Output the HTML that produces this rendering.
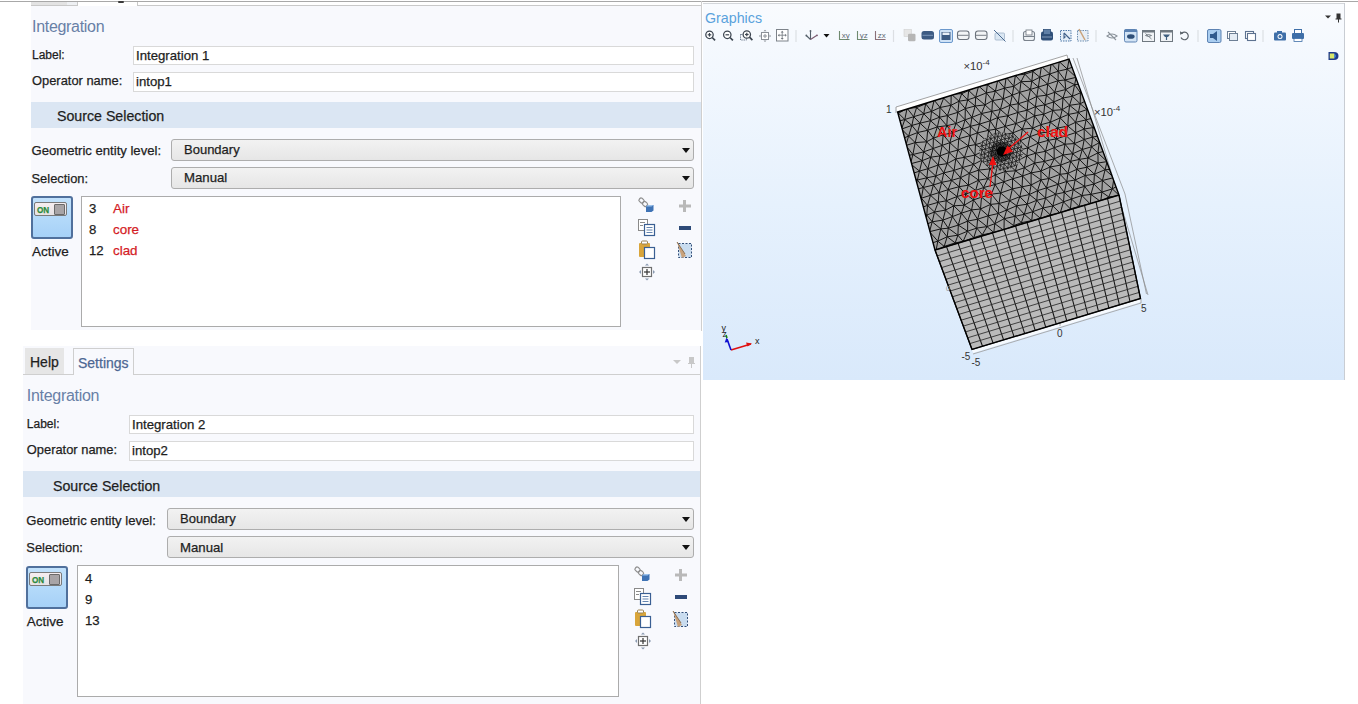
<!DOCTYPE html><html><head><meta charset="utf-8"><style>
html,body{margin:0;padding:0;width:1358px;height:704px;overflow:hidden;background:#fff}
.t{position:absolute;white-space:nowrap;font-family:"Liberation Sans",sans-serif;-webkit-text-stroke:0.25px currentColor}
.r{position:absolute}
</style></head><body>
<div class="r" style="left:0px;top:1px;width:1358px;height:1px;background:#a8a8a8"></div>
<div class="r" style="left:31px;top:6px;width:670px;height:324px;background:#f8f9fd"></div>
<div class="r" style="left:31px;top:2px;width:36px;height:3px;background:#e3e3e3"></div>
<div class="r" style="left:67px;top:2px;width:10px;height:3px;background:#eef0f3"></div>
<div class="r" style="left:31px;top:5px;width:46px;height:1px;background:#c9c9c9"></div>
<div class="r" style="left:77px;top:2px;width:1px;height:4px;background:#c9c9c9"></div>
<div class="r" style="left:137px;top:2px;width:1px;height:4px;background:#c9c9c9"></div>
<div class="r" style="left:137px;top:5px;width:564px;height:1px;background:#c9c9c9"></div>
<div class="r" style="left:118px;top:1px;width:6px;height:2px;background:#3a3a3a;border-radius:2px"></div>
<div class="r" style="left:701px;top:1px;width:1px;height:330px;background:#cfcfcf"></div>
<div class="t" style="left:32.0px;top:18.5px;font-size:16px;line-height:16px;color:#6880a6;letter-spacing:-0.3px;-webkit-text-stroke:0">Integration</div>
<div class="t" style="left:32.0px;top:49.3px;font-size:12px;line-height:12px;color:#1e1e1e;">Label:</div>
<div class="t" style="left:32.0px;top:75.05px;font-size:12.9px;line-height:12.9px;color:#1e1e1e;">Operator name:</div>
<div class="r" style="left:133px;top:46px;width:561px;height:19px;background:#fff;border:1px solid #d9d9d9;box-sizing:border-box"></div>
<div class="r" style="left:133px;top:72px;width:561px;height:20px;background:#fff;border:1px solid #d9d9d9;box-sizing:border-box"></div>
<div class="t" style="left:136px;top:48.5px;font-size:13.2px;line-height:13.2px;color:#1e1e1e;">Integration 1</div>
<div class="t" style="left:136px;top:74.5px;font-size:13.2px;line-height:13.2px;color:#1e1e1e;">intop1</div>
<div class="r" style="left:31px;top:102px;width:670px;height:26px;background:#dbe6f3"></div>
<div class="t" style="left:57px;top:108.9px;font-size:14.2px;line-height:14.2px;color:#1e1e1e;">Source Selection</div>
<div class="t" style="left:31.5px;top:143.95px;font-size:13.1px;line-height:13.1px;color:#1e1e1e;">Geometric entity level:</div>
<div class="t" style="left:31.5px;top:172.55px;font-size:12.9px;line-height:12.9px;color:#1e1e1e;">Selection:</div>
<div class="r" style="left:171px;top:139px;width:523px;height:22px;background:linear-gradient(#f2f2f2,#e6e6e6);border:1px solid #adadad;border-radius:3px;box-sizing:border-box"></div>
<svg class="r" style="left:682px;top:148px" width="8" height="5"><path d="M0 0 H8 L4 5 Z" fill="#111"/></svg>
<div class="r" style="left:171px;top:167px;width:523px;height:22px;background:linear-gradient(#f2f2f2,#e6e6e6);border:1px solid #adadad;border-radius:3px;box-sizing:border-box"></div>
<svg class="r" style="left:682px;top:176px" width="8" height="5"><path d="M0 0 H8 L4 5 Z" fill="#111"/></svg>
<div class="t" style="left:184px;top:142.5px;font-size:13px;line-height:13px;color:#1e1e1e;">Boundary</div>
<div class="t" style="left:184px;top:171.4px;font-size:13.2px;line-height:13.2px;color:#1e1e1e;">Manual</div>
<div class="r" style="left:31.0px;top:196px;width:42px;height:43px;background:linear-gradient(#c2e2fc,#a6d1f7);border:2px solid #50709c;border-radius:3px;box-sizing:border-box"></div>
<div class="r" style="left:34.0px;top:202px;width:33px;height:14px;background:linear-gradient(#f6eef0,#e6e2e4);border:1px solid #7a7a7a;border-radius:2px;box-sizing:border-box"></div>
<div class="t" style="left:37.0px;top:205.5px;font-size:9px;line-height:9px;color:#2a8a3c;font-weight:bold;transform:scaleX(0.9);transform-origin:0 0">ON</div>
<div class="r" style="left:54.0px;top:204px;width:11px;height:11px;background:#a8a4a6;border:1px solid #6a6a6a;border-radius:1px;box-sizing:border-box"></div>
<div class="t" style="left:32.0px;top:244.75px;font-size:13.5px;line-height:13.5px;color:#1e1e1e;">Active</div>
<div class="r" style="left:81px;top:196px;width:540.0px;height:131px;background:#fff;border:1px solid #ababab;box-sizing:border-box"></div>
<div class="t" style="left:89px;top:201.9px;font-size:13.2px;line-height:13.2px;color:#1e1e1e;">3</div>
<div class="t" style="left:113px;top:201.8px;font-size:13.4px;line-height:13.4px;color:#d41c26;">Air</div>
<div class="t" style="left:89px;top:222.9px;font-size:13.2px;line-height:13.2px;color:#1e1e1e;">8</div>
<div class="t" style="left:113px;top:222.8px;font-size:13.4px;line-height:13.4px;color:#d41c26;">core</div>
<div class="t" style="left:89px;top:243.9px;font-size:13.2px;line-height:13.2px;color:#1e1e1e;">12</div>
<div class="t" style="left:113px;top:243.8px;font-size:13.4px;line-height:13.4px;color:#d41c26;">clad</div>
<svg class="r" style="left:636px;top:195px" width="60" height="90" viewBox="0 0 60 90">
<g fill="none" stroke="#8f8f8f" stroke-width="1.2"><rect x="3" y="3.5" width="5" height="4" rx="1.5" transform="rotate(40 5.5 5.5)"/><rect x="6.5" y="7" width="5" height="4" rx="1.5" transform="rotate(40 9 9)"/></g>
<path d="M10 11.5 l2 -1.5 h5.5 v5.5 l-2 1.5 h-5.5z" fill="#3f73b5"/><path d="M10 11.5 l2 -1.5 h5.5 l-2 1.5z" fill="#9cc2ec"/>
<rect x="2.5" y="24.5" width="9" height="11" fill="#fff" stroke="#8a8a8a"/>
<g stroke="#8a8a8a"><line x1="4" y1="27.5" x2="9" y2="27.5"/><line x1="4" y1="30.5" x2="7" y2="30.5"/></g>
<rect x="8.5" y="29.5" width="10" height="11" fill="#fff" stroke="#3a5f93" stroke-width="1.2"/>
<g stroke="#6585b0"><line x1="10.5" y1="32.5" x2="16.5" y2="32.5"/><line x1="10.5" y1="35" x2="16.5" y2="35"/><line x1="10.5" y1="37.5" x2="16.5" y2="37.5"/></g>
<rect x="3" y="48" width="11" height="14" rx="1" fill="#d9a53a"/><rect x="5.5" y="46" width="6" height="3" rx="1" fill="#fff" stroke="#9a8250"/>
<rect x="8.5" y="52.5" width="10" height="11" fill="#fff" stroke="#3a5f93" stroke-width="1.2"/>
<rect x="6.5" y="72.5" width="9" height="9" fill="#fff" stroke="#6f6f6f" stroke-width="1.2"/>
<g stroke="#333" stroke-width="1.2"><line x1="11" y1="74" x2="11" y2="80"/><line x1="8" y1="77" x2="14" y2="77"/></g>
<g fill="#8a9ab0"><path d="M11 68.5 l2 2 h-4z"/><path d="M11 85.5 l2 -2 h-4z"/><path d="M3 77 l2 -2 v4z"/><path d="M19 77 l-2 -2 v4z"/></g>
<g fill="#b9b9b9"><rect x="47" y="5" width="3" height="12"/><rect x="43" y="9.5" width="12" height="3"/></g>
<rect x="43" y="31" width="12" height="4" fill="#2e4a78"/>
<rect x="42.5" y="48.5" width="13" height="14" fill="#c9dcef" stroke="#33507a" stroke-dasharray="2 1.5"/>
<path d="M41 47 L50 61 L46 63 Z" fill="#c9a27a"/><path d="M41 47 L49 59" stroke="#8a6a4a" stroke-width="1"/>
</svg>
<div class="r" style="left:23px;top:346px;width:677px;height:358px;background:#f8f9fd"></div>
<div class="r" style="left:25px;top:348px;width:39px;height:26px;background:#e6e6e6"></div>
<div class="r" style="left:23px;top:374px;width:50px;height:1px;background:#cfcfcf"></div>
<div class="r" style="left:73px;top:348px;width:61px;height:27px;background:#f8f9fd;border:1px solid #cfcfcf;border-bottom:none;box-sizing:border-box"></div>
<div class="r" style="left:134px;top:374px;width:566px;height:1px;background:#cfcfcf"></div>
<div class="r" style="left:700px;top:346px;width:1px;height:358px;background:#cfcfcf"></div>
<div class="t" style="left:30px;top:355.0px;font-size:14px;line-height:14px;color:#1e1e1e;">Help</div>
<div class="t" style="left:78px;top:356.0px;font-size:14px;line-height:14px;color:#4d6793;">Settings</div>
<svg class="r" style="left:670px;top:355px" width="30" height="16"><path d="M3 5 L11 5 L7 9 Z" fill="#c8c8c8"/><path d="M19 2 h5 v6 h1 v1 h-3 v4 h-1 v-4 h-3 v-1 h1 z" fill="#c8c8c8"/></svg>
<div class="t" style="left:26.8px;top:387.5px;font-size:16px;line-height:16px;color:#6880a6;letter-spacing:-0.3px;-webkit-text-stroke:0">Integration</div>
<div class="t" style="left:26.8px;top:418.3px;font-size:12px;line-height:12px;color:#1e1e1e;">Label:</div>
<div class="t" style="left:26.8px;top:444.05px;font-size:12.9px;line-height:12.9px;color:#1e1e1e;">Operator name:</div>
<div class="r" style="left:129px;top:415px;width:565px;height:19px;background:#fff;border:1px solid #d9d9d9;box-sizing:border-box"></div>
<div class="r" style="left:129px;top:441px;width:565px;height:20px;background:#fff;border:1px solid #d9d9d9;box-sizing:border-box"></div>
<div class="t" style="left:132px;top:417.5px;font-size:13.2px;line-height:13.2px;color:#1e1e1e;">Integration 2</div>
<div class="t" style="left:132px;top:443.5px;font-size:13.2px;line-height:13.2px;color:#1e1e1e;">intop2</div>
<div class="r" style="left:23px;top:471px;width:677px;height:26px;background:#dbe6f3"></div>
<div class="t" style="left:53px;top:478.7px;font-size:14.2px;line-height:14.2px;color:#1e1e1e;">Source Selection</div>
<div class="t" style="left:26.3px;top:513.75px;font-size:13.1px;line-height:13.1px;color:#1e1e1e;">Geometric entity level:</div>
<div class="t" style="left:26.3px;top:542.3499999999999px;font-size:12.9px;line-height:12.9px;color:#1e1e1e;">Selection:</div>
<div class="r" style="left:167px;top:508px;width:527px;height:22px;background:linear-gradient(#f2f2f2,#e6e6e6);border:1px solid #adadad;border-radius:3px;box-sizing:border-box"></div>
<svg class="r" style="left:682px;top:517px" width="8" height="5"><path d="M0 0 H8 L4 5 Z" fill="#111"/></svg>
<div class="r" style="left:167px;top:536px;width:527px;height:22px;background:linear-gradient(#f2f2f2,#e6e6e6);border:1px solid #adadad;border-radius:3px;box-sizing:border-box"></div>
<svg class="r" style="left:682px;top:545px" width="8" height="5"><path d="M0 0 H8 L4 5 Z" fill="#111"/></svg>
<div class="t" style="left:180px;top:512.3px;font-size:13px;line-height:13px;color:#1e1e1e;">Boundary</div>
<div class="t" style="left:180px;top:541.1999999999999px;font-size:13.2px;line-height:13.2px;color:#1e1e1e;">Manual</div>
<div class="r" style="left:25.8px;top:566px;width:42px;height:43px;background:linear-gradient(#c2e2fc,#a6d1f7);border:2px solid #50709c;border-radius:3px;box-sizing:border-box"></div>
<div class="r" style="left:28.8px;top:572px;width:33px;height:14px;background:linear-gradient(#f6eef0,#e6e2e4);border:1px solid #7a7a7a;border-radius:2px;box-sizing:border-box"></div>
<div class="t" style="left:31.8px;top:575.5px;font-size:9px;line-height:9px;color:#2a8a3c;font-weight:bold;transform:scaleX(0.9);transform-origin:0 0">ON</div>
<div class="r" style="left:48.8px;top:574px;width:11px;height:11px;background:#a8a4a6;border:1px solid #6a6a6a;border-radius:1px;box-sizing:border-box"></div>
<div class="t" style="left:26.8px;top:614.55px;font-size:13.5px;line-height:13.5px;color:#1e1e1e;">Active</div>
<div class="r" style="left:77px;top:565px;width:542.0px;height:132px;background:#fff;border:1px solid #ababab;box-sizing:border-box"></div>
<div class="t" style="left:85px;top:571.6999999999999px;font-size:13.2px;line-height:13.2px;color:#1e1e1e;">4</div>
<div class="t" style="left:85px;top:592.6999999999999px;font-size:13.2px;line-height:13.2px;color:#1e1e1e;">9</div>
<div class="t" style="left:85px;top:613.6999999999999px;font-size:13.2px;line-height:13.2px;color:#1e1e1e;">13</div>
<svg class="r" style="left:632px;top:564px" width="60" height="90" viewBox="0 0 60 90">
<g fill="none" stroke="#8f8f8f" stroke-width="1.2"><rect x="3" y="3.5" width="5" height="4" rx="1.5" transform="rotate(40 5.5 5.5)"/><rect x="6.5" y="7" width="5" height="4" rx="1.5" transform="rotate(40 9 9)"/></g>
<path d="M10 11.5 l2 -1.5 h5.5 v5.5 l-2 1.5 h-5.5z" fill="#3f73b5"/><path d="M10 11.5 l2 -1.5 h5.5 l-2 1.5z" fill="#9cc2ec"/>
<rect x="2.5" y="24.5" width="9" height="11" fill="#fff" stroke="#8a8a8a"/>
<g stroke="#8a8a8a"><line x1="4" y1="27.5" x2="9" y2="27.5"/><line x1="4" y1="30.5" x2="7" y2="30.5"/></g>
<rect x="8.5" y="29.5" width="10" height="11" fill="#fff" stroke="#3a5f93" stroke-width="1.2"/>
<g stroke="#6585b0"><line x1="10.5" y1="32.5" x2="16.5" y2="32.5"/><line x1="10.5" y1="35" x2="16.5" y2="35"/><line x1="10.5" y1="37.5" x2="16.5" y2="37.5"/></g>
<rect x="3" y="48" width="11" height="14" rx="1" fill="#d9a53a"/><rect x="5.5" y="46" width="6" height="3" rx="1" fill="#fff" stroke="#9a8250"/>
<rect x="8.5" y="52.5" width="10" height="11" fill="#fff" stroke="#3a5f93" stroke-width="1.2"/>
<rect x="6.5" y="72.5" width="9" height="9" fill="#fff" stroke="#6f6f6f" stroke-width="1.2"/>
<g stroke="#333" stroke-width="1.2"><line x1="11" y1="74" x2="11" y2="80"/><line x1="8" y1="77" x2="14" y2="77"/></g>
<g fill="#8a9ab0"><path d="M11 68.5 l2 2 h-4z"/><path d="M11 85.5 l2 -2 h-4z"/><path d="M3 77 l2 -2 v4z"/><path d="M19 77 l-2 -2 v4z"/></g>
<g fill="#b9b9b9"><rect x="47" y="5" width="3" height="12"/><rect x="43" y="9.5" width="12" height="3"/></g>
<rect x="43" y="31" width="12" height="4" fill="#2e4a78"/>
<rect x="42.5" y="48.5" width="13" height="14" fill="#c9dcef" stroke="#33507a" stroke-dasharray="2 1.5"/>
<path d="M41 47 L50 61 L46 63 Z" fill="#c9a27a"/><path d="M41 47 L49 59" stroke="#8a6a4a" stroke-width="1"/>
</svg>
<div class="r" style="left:703px;top:3px;width:642px;height:1px;background:#d3d6da"></div>
<div class="r" style="left:1344px;top:3px;width:1px;height:377px;background:#c9cdd3"></div>
<div class="r" style="left:703px;top:4px;width:641px;height:376px;background:linear-gradient(#f9fbfe 0px,#f5f9fe 40px,#e6f1fd 200px,#d9e9fb 376px)"></div>
<div class="t" style="left:705px;top:10.0px;font-size:15px;line-height:15px;color:#5aa2dc;transform:scaleX(0.95);transform-origin:0 0;-webkit-text-stroke:0">Graphics</div>
<svg class="r" style="left:703px;top:4px" width="641" height="376"><defs><clipPath id="ct"><polygon points="194.6,108.0 366.0,55.0 416.0,191.0 232.0,246.0"/></clipPath><clipPath id="cf"><polygon points="232.0,246.0 416.0,191.0 437.5,294.5 269.0,345.5"/></clipPath><clipPath id="cc1"><ellipse cx="298" cy="147.5" rx="22" ry="19"/></clipPath><clipPath id="cc2"><ellipse cx="298" cy="147.5" rx="11" ry="10"/></clipPath></defs><polygon points="193.0,103.0 364.0,51.0 366.0,55.0 194.6,108.0" fill="#ffffff"/><polyline points="193.0,109.0 193.0,103.0 364.0,51.0 365.0,55.0" fill="none" stroke="#8c8c8c" stroke-width="0.8"/><polyline points="370.0,54.0 422.0,190.0 443.5,290.0" fill="none" stroke="#8a8a8a" stroke-width="0.7"/><polyline points="374.0,54.0 445.0,291.0" fill="none" stroke="#8a8a8a" stroke-width="0.7"/><polygon points="269.0,345.5 437.5,294.5 438.0,298.0 270.0,349.0" fill="#ffffff" opacity="0.75"/><polyline points="270.0,350.0 438.0,299.0 438.0,295.0" fill="none" stroke="#9a9a9a" stroke-width="0.8"/><line x1="357" y1="318" x2="357" y2="322" stroke="#9a9a9a" stroke-width="0.8"/><line x1="279" y1="94" x2="279" y2="90" stroke="#9a9a9a" stroke-width="0.8"/><polygon points="194.6,108.0 366.0,55.0 416.0,191.0 232.0,246.0" fill="#a2a2a2"/><path d="M178.1 103.7L187.4 101.0M178.1 103.7L176.8 114.6M178.1 103.7L186.1 111.9M187.4 101.0L197.1 96.9M187.4 101.0L186.1 111.9M187.4 101.0L195.5 109.3M197.1 96.9L204.5 96.1M197.1 96.9L195.5 109.3M197.1 96.9L204.1 104.3M204.5 96.1L214.1 91.7M204.5 96.1L204.1 104.3M204.5 96.1L213.6 103.6M214.1 91.7L225.0 89.6M214.1 91.7L213.6 103.6M214.1 91.7L222.7 99.8M225.0 89.6L233.5 86.8M225.0 89.6L222.7 99.8M225.0 89.6L231.2 96.1M233.5 86.8L242.0 83.2M233.5 86.8L231.2 96.1M233.5 86.8L240.6 94.2M242.0 83.2L251.0 82.2M242.0 83.2L240.6 94.2M242.0 83.2L248.2 90.1M251.0 82.2L259.7 79.1M251.0 82.2L248.2 90.1M251.0 82.2L258.7 89.7M259.7 79.1L269.0 74.6M259.7 79.1L258.7 89.7M259.7 79.1L265.7 86.5M269.0 74.6L278.2 73.2M269.0 74.6L265.7 86.5M269.0 74.6L275.6 82.0M278.2 73.2L286.0 68.9M278.2 73.2L275.6 82.0M278.2 73.2L284.3 80.8M286.0 68.9L296.5 67.3M286.0 68.9L284.3 80.8M286.0 68.9L294.8 76.1M296.5 67.3L305.1 65.6M296.5 67.3L294.8 76.1M296.5 67.3L303.2 73.3M305.1 65.6L314.0 62.9M305.1 65.6L303.2 73.3M305.1 65.6L312.4 71.3M314.0 62.9L322.2 59.8M314.0 62.9L312.4 71.3M314.0 62.9L321.9 70.2M322.2 59.8L331.3 57.4M322.2 59.8L321.9 70.2M322.2 59.8L329.9 67.5M331.3 57.4L341.4 52.4M331.3 57.4L329.9 67.5M331.3 57.4L338.4 62.3M341.4 52.4L348.5 49.9M341.4 52.4L338.4 62.3M341.4 52.4L348.2 59.4M348.5 49.9L359.6 47.7M348.5 49.9L348.2 59.4M348.5 49.9L356.2 57.6M359.6 47.7L367.7 44.6M359.6 47.7L356.2 57.6M359.6 47.7L366.3 54.1M367.7 44.6L376.4 42.0M367.7 44.6L366.3 54.1M367.7 44.6L373.8 53.2M376.4 42.0L384.9 39.8M376.4 42.0L373.8 53.2M376.4 42.0L383.6 50.6M384.9 39.8L383.6 50.6M176.8 114.6L186.1 111.9M176.8 114.6L184.4 120.5M186.1 111.9L195.5 109.3M186.1 111.9L184.4 120.5M186.1 111.9L192.3 118.1M195.5 109.3L204.1 104.3M195.5 109.3L192.3 118.1M195.5 109.3L201.8 115.5M204.1 104.3L213.6 103.6M204.1 104.3L201.8 115.5M204.1 104.3L210.7 112.7M213.6 103.6L222.7 99.8M213.6 103.6L210.7 112.7M213.6 103.6L220.7 109.7M222.7 99.8L231.2 96.1M222.7 99.8L220.7 109.7M222.7 99.8L228.5 107.4M231.2 96.1L240.6 94.2M231.2 96.1L228.5 107.4M231.2 96.1L237.0 103.5M240.6 94.2L248.2 90.1M240.6 94.2L237.0 103.5M240.6 94.2L248.0 101.3M248.2 90.1L258.7 89.7M248.2 90.1L248.0 101.3M248.2 90.1L256.0 97.2M258.7 89.7L265.7 86.5M258.7 89.7L256.0 97.2M258.7 89.7L264.7 95.9M265.7 86.5L275.6 82.0M265.7 86.5L264.7 95.9M265.7 86.5L272.7 93.2M275.6 82.0L284.3 80.8M275.6 82.0L272.7 93.2M275.6 82.0L283.4 88.9M284.3 80.8L294.8 76.1M284.3 80.8L283.4 88.9M284.3 80.8L292.4 87.2M294.8 76.1L303.2 73.3M294.8 76.1L292.4 87.2M294.8 76.1L301.6 84.1M303.2 73.3L312.4 71.3M303.2 73.3L301.6 84.1M303.2 73.3L310.8 82.3M312.4 71.3L321.9 70.2M312.4 71.3L310.8 82.3M312.4 71.3L318.0 77.7M321.9 70.2L329.9 67.5M321.9 70.2L318.0 77.7M321.9 70.2L328.8 77.3M329.9 67.5L338.4 62.3M329.9 67.5L328.8 77.3M329.9 67.5L336.8 73.2M338.4 62.3L348.2 59.4M338.4 62.3L336.8 73.2M338.4 62.3L346.7 70.0M348.2 59.4L356.2 57.6M348.2 59.4L346.7 70.0M348.2 59.4L355.2 67.2M356.2 57.6L366.3 54.1M356.2 57.6L355.2 67.2M356.2 57.6L364.3 65.1M366.3 54.1L373.8 53.2M366.3 54.1L364.3 65.1M366.3 54.1L373.1 61.8M373.8 53.2L383.6 50.6M373.8 53.2L373.1 61.8M373.8 53.2L383.4 58.1M383.6 50.6L383.4 58.1M383.6 50.6L392.0 57.1M184.4 120.5L192.3 118.1M184.4 120.5L180.6 130.1M184.4 120.5L191.0 127.4M192.3 118.1L201.8 115.5M192.3 118.1L191.0 127.4M192.3 118.1L198.5 125.1M201.8 115.5L210.7 112.7M201.8 115.5L198.5 125.1M201.8 115.5L208.9 121.4M210.7 112.7L220.7 109.7M210.7 112.7L208.9 121.4M210.7 112.7L217.0 119.2M220.7 109.7L228.5 107.4M220.7 109.7L217.0 119.2M220.7 109.7L227.5 116.7M228.5 107.4L237.0 103.5M228.5 107.4L227.5 116.7M228.5 107.4L236.6 113.2M237.0 103.5L248.0 101.3M237.0 103.5L236.6 113.2M237.0 103.5L244.4 111.6M248.0 101.3L256.0 97.2M248.0 101.3L244.4 111.6M248.0 101.3L254.9 108.3M256.0 97.2L264.7 95.9M256.0 97.2L254.9 108.3M256.0 97.2L262.3 104.6M264.7 95.9L272.7 93.2M264.7 95.9L262.3 104.6M264.7 95.9L272.2 102.0M272.7 93.2L283.4 88.9M272.7 93.2L272.2 102.0M272.7 93.2L282.0 100.9M283.4 88.9L292.4 87.2M283.4 88.9L282.0 100.9M283.4 88.9L289.5 96.6M292.4 87.2L301.6 84.1M292.4 87.2L289.5 96.6M292.4 87.2L300.2 94.8M301.6 84.1L310.8 82.3M301.6 84.1L300.2 94.8M301.6 84.1L309.3 91.2M310.8 82.3L318.0 77.7M310.8 82.3L309.3 91.2M310.8 82.3L316.7 88.3M318.0 77.7L328.8 77.3M318.0 77.7L316.7 88.3M318.0 77.7L327.5 85.4M328.8 77.3L336.8 73.2M328.8 77.3L327.5 85.4M328.8 77.3L335.4 83.0M336.8 73.2L346.7 70.0M336.8 73.2L335.4 83.0M336.8 73.2L344.7 80.2M346.7 70.0L355.2 67.2M346.7 70.0L344.7 80.2M346.7 70.0L355.1 76.7M355.2 67.2L364.3 65.1M355.2 67.2L355.1 76.7M355.2 67.2L361.9 76.0M364.3 65.1L373.1 61.8M364.3 65.1L361.9 76.0M364.3 65.1L373.2 73.3M373.1 61.8L383.4 58.1M373.1 61.8L373.2 73.3M373.1 61.8L381.2 70.4M383.4 58.1L392.0 57.1M383.4 58.1L381.2 70.4M383.4 58.1L391.6 65.7M392.0 57.1L391.6 65.7M180.6 130.1L191.0 127.4M180.6 130.1L188.5 139.0M191.0 127.4L198.5 125.1M191.0 127.4L188.5 139.0M191.0 127.4L197.5 135.3M198.5 125.1L208.9 121.4M198.5 125.1L197.5 135.3M198.5 125.1L205.6 132.1M208.9 121.4L217.0 119.2M208.9 121.4L205.6 132.1M208.9 121.4L214.6 128.5M217.0 119.2L227.5 116.7M217.0 119.2L214.6 128.5M217.0 119.2L224.7 126.3M227.5 116.7L236.6 113.2M227.5 116.7L224.7 126.3M227.5 116.7L234.4 122.9M236.6 113.2L244.4 111.6M236.6 113.2L234.4 122.9M236.6 113.2L243.8 121.7M244.4 111.6L254.9 108.3M244.4 111.6L243.8 121.7M244.4 111.6L253.0 119.5M254.9 108.3L262.3 104.6M254.9 108.3L253.0 119.5M254.9 108.3L262.1 115.8M262.3 104.6L272.2 102.0M262.3 104.6L262.1 115.8M262.3 104.6L268.9 113.4M272.2 102.0L282.0 100.9M272.2 102.0L268.9 113.4M272.2 102.0L278.5 109.5M282.0 100.9L289.5 96.6M282.0 100.9L278.5 109.5M282.0 100.9L288.9 107.3M289.5 96.6L300.2 94.8M289.5 96.6L288.9 107.3M289.5 96.6L297.4 105.5M300.2 94.8L309.3 91.2M300.2 94.8L297.4 105.5M300.2 94.8L307.1 101.2M309.3 91.2L316.7 88.3M309.3 91.2L307.1 101.2M309.3 91.2L315.3 99.7M316.7 88.3L327.5 85.4M316.7 88.3L315.3 99.7M316.7 88.3L325.0 96.7M327.5 85.4L335.4 83.0M327.5 85.4L325.0 96.7M327.5 85.4L333.8 92.4M335.4 83.0L344.7 80.2M335.4 83.0L333.8 92.4M335.4 83.0L343.5 91.2M344.7 80.2L355.1 76.7M344.7 80.2L343.5 91.2M344.7 80.2L351.7 88.3M355.1 76.7L361.9 76.0M355.1 76.7L351.7 88.3M355.1 76.7L362.8 85.5M361.9 76.0L373.2 73.3M361.9 76.0L362.8 85.5M361.9 76.0L371.6 80.6M373.2 73.3L381.2 70.4M373.2 73.3L371.6 80.6M373.2 73.3L380.3 80.0M381.2 70.4L391.6 65.7M381.2 70.4L380.3 80.0M381.2 70.4L387.9 75.7M391.6 65.7L387.9 75.7M391.6 65.7L397.6 73.5M188.5 139.0L197.5 135.3M188.5 139.0L185.4 148.1M188.5 139.0L195.5 144.0M197.5 135.3L205.6 132.1M197.5 135.3L195.5 144.0M197.5 135.3L202.8 141.5M205.6 132.1L214.6 128.5M205.6 132.1L202.8 141.5M205.6 132.1L212.2 138.6M214.6 128.5L224.7 126.3M214.6 128.5L212.2 138.6M214.6 128.5L223.6 137.8M224.7 126.3L234.4 122.9M224.7 126.3L223.6 137.8M224.7 126.3L230.4 134.1M234.4 122.9L243.8 121.7M234.4 122.9L230.4 134.1M234.4 122.9L240.2 130.8M243.8 121.7L253.0 119.5M243.8 121.7L240.2 130.8M243.8 121.7L249.5 128.8M253.0 119.5L262.1 115.8M253.0 119.5L249.5 128.8M253.0 119.5L259.3 125.2M262.1 115.8L268.9 113.4M262.1 115.8L259.3 125.2M262.1 115.8L267.5 122.3M268.9 113.4L278.5 109.5M268.9 113.4L267.5 122.3M268.9 113.4L276.5 120.1M278.5 109.5L288.9 107.3M278.5 109.5L276.5 120.1M278.5 109.5L287.2 116.8M288.9 107.3L297.4 105.5M288.9 107.3L287.2 116.8M288.9 107.3L294.7 113.5M297.4 105.5L307.1 101.2M297.4 105.5L294.7 113.5M297.4 105.5L304.7 111.8M307.1 101.2L315.3 99.7M307.1 101.2L304.7 111.8M307.1 101.2L314.9 108.4M315.3 99.7L325.0 96.7M315.3 99.7L314.9 108.4M315.3 99.7L324.2 106.2M325.0 96.7L333.8 92.4M325.0 96.7L324.2 106.2M325.0 96.7L332.4 102.7M333.8 92.4L343.5 91.2M333.8 92.4L332.4 102.7M333.8 92.4L341.7 100.8M343.5 91.2L351.7 88.3M343.5 91.2L341.7 100.8M343.5 91.2L350.7 98.0M351.7 88.3L362.8 85.5M351.7 88.3L350.7 98.0M351.7 88.3L360.0 94.0M362.8 85.5L371.6 80.6M362.8 85.5L360.0 94.0M362.8 85.5L369.4 92.3M371.6 80.6L380.3 80.0M371.6 80.6L369.4 92.3M371.6 80.6L377.4 88.8M380.3 80.0L387.9 75.7M380.3 80.0L377.4 88.8M380.3 80.0L387.5 87.2M387.9 75.7L397.6 73.5M387.9 75.7L387.5 87.2M387.9 75.7L398.0 83.0M397.6 73.5L398.0 83.0M185.4 148.1L195.5 144.0M185.4 148.1L193.5 156.1M195.5 144.0L202.8 141.5M195.5 144.0L193.5 156.1M195.5 144.0L201.1 152.4M202.8 141.5L212.2 138.6M202.8 141.5L201.1 152.4M202.8 141.5L209.9 150.5M212.2 138.6L223.6 137.8M212.2 138.6L209.9 150.5M212.2 138.6L220.6 147.9M223.6 137.8L230.4 134.1M223.6 137.8L220.6 147.9M223.6 137.8L230.1 144.5M230.4 134.1L240.2 130.8M230.4 134.1L230.1 144.5M230.4 134.1L239.2 141.4M240.2 130.8L249.5 128.8M240.2 130.8L239.2 141.4M240.2 130.8L246.8 138.7M249.5 128.8L259.3 125.2M249.5 128.8L246.8 138.7M249.5 128.8L255.8 134.7M259.3 125.2L267.5 122.3M259.3 125.2L255.8 134.7M259.3 125.2L267.0 131.6M267.5 122.3L276.5 120.1M267.5 122.3L267.0 131.6M267.5 122.3L274.4 128.9M276.5 120.1L287.2 116.8M276.5 120.1L274.4 128.9M276.5 120.1L285.7 126.3M287.2 116.8L294.7 113.5M287.2 116.8L285.7 126.3M287.2 116.8L292.7 125.2M294.7 113.5L304.7 111.8M294.7 113.5L292.7 125.2M294.7 113.5L302.2 122.4M304.7 111.8L314.9 108.4M304.7 111.8L302.2 122.4M304.7 111.8L312.9 119.5M314.9 108.4L324.2 106.2M314.9 108.4L312.9 119.5M314.9 108.4L322.8 116.1M324.2 106.2L332.4 102.7M324.2 106.2L322.8 116.1M324.2 106.2L331.6 111.8M332.4 102.7L341.7 100.8M332.4 102.7L331.6 111.8M332.4 102.7L340.8 110.2M341.7 100.8L350.7 98.0M341.7 100.8L340.8 110.2M341.7 100.8L349.9 106.4M350.7 98.0L360.0 94.0M350.7 98.0L349.9 106.4M350.7 98.0L359.2 105.7M360.0 94.0L369.4 92.3M360.0 94.0L359.2 105.7M360.0 94.0L366.6 101.3M369.4 92.3L377.4 88.8M369.4 92.3L366.6 101.3M369.4 92.3L377.2 99.8M377.4 88.8L387.5 87.2M377.4 88.8L377.2 99.8M377.4 88.8L385.6 95.3M387.5 87.2L398.0 83.0M387.5 87.2L385.6 95.3M387.5 87.2L394.8 93.6M398.0 83.0L394.8 93.6M398.0 83.0L405.4 90.2M193.5 156.1L201.1 152.4M193.5 156.1L189.7 165.1M193.5 156.1L199.0 162.4M201.1 152.4L209.9 150.5M201.1 152.4L199.0 162.4M201.1 152.4L207.5 159.8M209.9 150.5L220.6 147.9M209.9 150.5L207.5 159.8M209.9 150.5L219.1 156.7M220.6 147.9L230.1 144.5M220.6 147.9L219.1 156.7M220.6 147.9L227.8 153.2M230.1 144.5L239.2 141.4M230.1 144.5L227.8 153.2M230.1 144.5L236.9 151.9M239.2 141.4L246.8 138.7M239.2 141.4L236.9 151.9M239.2 141.4L246.2 148.5M246.8 138.7L255.8 134.7M246.8 138.7L246.2 148.5M246.8 138.7L254.9 146.0M255.8 134.7L267.0 131.6M255.8 134.7L254.9 146.0M255.8 134.7L265.3 141.9M267.0 131.6L274.4 128.9M267.0 131.6L265.3 141.9M267.0 131.6L272.5 140.6M274.4 128.9L285.7 126.3M274.4 128.9L272.5 140.6M274.4 128.9L283.9 137.2M285.7 126.3L292.7 125.2M285.7 126.3L283.9 137.2M285.7 126.3L291.9 134.9M292.7 125.2L302.2 122.4M292.7 125.2L291.9 134.9M292.7 125.2L300.5 130.9M302.2 122.4L312.9 119.5M302.2 122.4L300.5 130.9M302.2 122.4L309.8 128.9M312.9 119.5L322.8 116.1M312.9 119.5L309.8 128.9M312.9 119.5L319.4 125.1M322.8 116.1L331.6 111.8M322.8 116.1L319.4 125.1M322.8 116.1L329.6 124.2M331.6 111.8L340.8 110.2M331.6 111.8L329.6 124.2M331.6 111.8L337.9 120.7M340.8 110.2L349.9 106.4M340.8 110.2L337.9 120.7M340.8 110.2L347.4 118.2M349.9 106.4L359.2 105.7M349.9 106.4L347.4 118.2M349.9 106.4L357.2 113.9M359.2 105.7L366.6 101.3M359.2 105.7L357.2 113.9M359.2 105.7L365.5 110.4M366.6 101.3L377.2 99.8M366.6 101.3L365.5 110.4M366.6 101.3L375.4 108.5M377.2 99.8L385.6 95.3M377.2 99.8L375.4 108.5M377.2 99.8L383.9 105.6M385.6 95.3L394.8 93.6M385.6 95.3L383.9 105.6M385.6 95.3L393.6 103.9M394.8 93.6L405.4 90.2M394.8 93.6L393.6 103.9M394.8 93.6L402.4 101.6M405.4 90.2L402.4 101.6M189.7 165.1L199.0 162.4M189.7 165.1L196.9 172.9M199.0 162.4L207.5 159.8M199.0 162.4L196.9 172.9M199.0 162.4L206.2 170.7M207.5 159.8L219.1 156.7M207.5 159.8L206.2 170.7M207.5 159.8L216.5 167.1M219.1 156.7L227.8 153.2M219.1 156.7L216.5 167.1M219.1 156.7L224.9 164.7M227.8 153.2L236.9 151.9M227.8 153.2L224.9 164.7M227.8 153.2L235.2 161.0M236.9 151.9L246.2 148.5M236.9 151.9L235.2 161.0M236.9 151.9L244.2 159.6M246.2 148.5L254.9 146.0M246.2 148.5L244.2 159.6M246.2 148.5L252.8 154.9M254.9 146.0L265.3 141.9M254.9 146.0L252.8 154.9M254.9 146.0L261.5 153.3M265.3 141.9L272.5 140.6M265.3 141.9L261.5 153.3M265.3 141.9L271.9 151.1M272.5 140.6L283.9 137.2M272.5 140.6L271.9 151.1M272.5 140.6L281.7 146.4M283.9 137.2L291.9 134.9M283.9 137.2L281.7 146.4M283.9 137.2L289.3 143.6M291.9 134.9L300.5 130.9M291.9 134.9L289.3 143.6M291.9 134.9L298.6 142.0M300.5 130.9L309.8 128.9M300.5 130.9L298.6 142.0M300.5 130.9L309.7 139.6M309.8 128.9L319.4 125.1M309.8 128.9L309.7 139.6M309.8 128.9L317.4 136.7M319.4 125.1L329.6 124.2M319.4 125.1L317.4 136.7M319.4 125.1L326.9 132.7M329.6 124.2L337.9 120.7M329.6 124.2L326.9 132.7M329.6 124.2L337.3 129.0M337.9 120.7L347.4 118.2M337.9 120.7L337.3 129.0M337.9 120.7L344.9 128.1M347.4 118.2L357.2 113.9M347.4 118.2L344.9 128.1M347.4 118.2L354.7 124.1M357.2 113.9L365.5 110.4M357.2 113.9L354.7 124.1M357.2 113.9L364.8 122.0M365.5 110.4L375.4 108.5M365.5 110.4L364.8 122.0M365.5 110.4L372.6 118.3M375.4 108.5L383.9 105.6M375.4 108.5L372.6 118.3M375.4 108.5L383.1 115.9M383.9 105.6L393.6 103.9M383.9 105.6L383.1 115.9M383.9 105.6L391.8 113.3M393.6 103.9L402.4 101.6M393.6 103.9L391.8 113.3M393.6 103.9L403.0 110.0M402.4 101.6L403.0 110.0M402.4 101.6L411.3 106.4M196.9 172.9L206.2 170.7M196.9 172.9L194.0 183.1M196.9 172.9L202.9 180.8M206.2 170.7L216.5 167.1M206.2 170.7L202.9 180.8M206.2 170.7L214.4 176.0M216.5 167.1L224.9 164.7M216.5 167.1L214.4 176.0M216.5 167.1L223.8 173.8M224.9 164.7L235.2 161.0M224.9 164.7L223.8 173.8M224.9 164.7L232.7 172.0M235.2 161.0L244.2 159.6M235.2 161.0L232.7 172.0M235.2 161.0L240.8 168.9M244.2 159.6L252.8 154.9M244.2 159.6L240.8 168.9M244.2 159.6L251.1 166.4M252.8 154.9L261.5 153.3M252.8 154.9L251.1 166.4M252.8 154.9L259.5 163.5M261.5 153.3L271.9 151.1M261.5 153.3L259.5 163.5M261.5 153.3L270.6 160.4M271.9 151.1L281.7 146.4M271.9 151.1L270.6 160.4M271.9 151.1L278.9 156.1M281.7 146.4L289.3 143.6M281.7 146.4L278.9 156.1M281.7 146.4L288.1 153.9M289.3 143.6L298.6 142.0M289.3 143.6L288.1 153.9M289.3 143.6L298.0 151.9M298.6 142.0L309.7 139.6M298.6 142.0L298.0 151.9M298.6 142.0L307.0 147.8M309.7 139.6L317.4 136.7M309.7 139.6L307.0 147.8M309.7 139.6L316.6 146.1M317.4 136.7L326.9 132.7M317.4 136.7L316.6 146.1M317.4 136.7L324.7 143.9M326.9 132.7L337.3 129.0M326.9 132.7L324.7 143.9M326.9 132.7L335.3 139.1M337.3 129.0L344.9 128.1M337.3 129.0L335.3 139.1M337.3 129.0L345.4 136.3M344.9 128.1L354.7 124.1M344.9 128.1L345.4 136.3M344.9 128.1L353.2 134.9M354.7 124.1L364.8 122.0M354.7 124.1L353.2 134.9M354.7 124.1L363.2 131.7M364.8 122.0L372.6 118.3M364.8 122.0L363.2 131.7M364.8 122.0L372.7 128.6M372.6 118.3L383.1 115.9M372.6 118.3L372.7 128.6M372.6 118.3L381.2 125.0M383.1 115.9L391.8 113.3M383.1 115.9L381.2 125.0M383.1 115.9L389.9 123.6M391.8 113.3L403.0 110.0M391.8 113.3L389.9 123.6M391.8 113.3L401.0 120.3M403.0 110.0L411.3 106.4M403.0 110.0L401.0 120.3M403.0 110.0L410.3 116.9M411.3 106.4L410.3 116.9M194.0 183.1L202.9 180.8M194.0 183.1L200.9 189.6M202.9 180.8L214.4 176.0M202.9 180.8L200.9 189.6M202.9 180.8L211.9 185.9M214.4 176.0L223.8 173.8M214.4 176.0L211.9 185.9M214.4 176.0L220.3 183.5M223.8 173.8L232.7 172.0M223.8 173.8L220.3 183.5M223.8 173.8L230.4 181.0M232.7 172.0L240.8 168.9M232.7 172.0L230.4 181.0M232.7 172.0L238.7 178.3M240.8 168.9L251.1 166.4M240.8 168.9L238.7 178.3M240.8 168.9L248.6 176.4M251.1 166.4L259.5 163.5M251.1 166.4L248.6 176.4M251.1 166.4L257.5 173.7M259.5 163.5L270.6 160.4M259.5 163.5L257.5 173.7M259.5 163.5L266.3 169.4M270.6 160.4L278.9 156.1M270.6 160.4L266.3 169.4M270.6 160.4L275.7 166.1M278.9 156.1L288.1 153.9M278.9 156.1L275.7 166.1M278.9 156.1L286.8 164.9M288.1 153.9L298.0 151.9M288.1 153.9L286.8 164.9M288.1 153.9L294.7 160.6M298.0 151.9L307.0 147.8M298.0 151.9L294.7 160.6M298.0 151.9L304.7 159.2M307.0 147.8L316.6 146.1M307.0 147.8L304.7 159.2M307.0 147.8L315.1 156.4M316.6 146.1L324.7 143.9M316.6 146.1L315.1 156.4M316.6 146.1L323.9 151.9M324.7 143.9L335.3 139.1M324.7 143.9L323.9 151.9M324.7 143.9L332.8 149.2M335.3 139.1L345.4 136.3M335.3 139.1L332.8 149.2M335.3 139.1L342.5 147.3M345.4 136.3L353.2 134.9M345.4 136.3L342.5 147.3M345.4 136.3L351.1 143.7M353.2 134.9L363.2 131.7M353.2 134.9L351.1 143.7M353.2 134.9L362.0 140.2M363.2 131.7L372.7 128.6M363.2 131.7L362.0 140.2M363.2 131.7L371.4 139.6M372.7 128.6L381.2 125.0M372.7 128.6L371.4 139.6M372.7 128.6L381.2 135.5M381.2 125.0L389.9 123.6M381.2 125.0L381.2 135.5M381.2 125.0L389.6 133.1M389.9 123.6L401.0 120.3M389.9 123.6L389.6 133.1M389.9 123.6L399.2 131.3M401.0 120.3L410.3 116.9M401.0 120.3L399.2 131.3M401.0 120.3L408.7 126.7M410.3 116.9L408.7 126.7M410.3 116.9L418.5 124.3M200.9 189.6L211.9 185.9M200.9 189.6L199.4 200.6M200.9 189.6L207.2 197.8M211.9 185.9L220.3 183.5M211.9 185.9L207.2 197.8M211.9 185.9L218.4 194.2M220.3 183.5L230.4 181.0M220.3 183.5L218.4 194.2M220.3 183.5L227.5 191.3M230.4 181.0L238.7 178.3M230.4 181.0L227.5 191.3M230.4 181.0L236.0 188.6M238.7 178.3L248.6 176.4M238.7 178.3L236.0 188.6M238.7 178.3L245.1 185.7M248.6 176.4L257.5 173.7M248.6 176.4L245.1 185.7M248.6 176.4L256.1 182.7M257.5 173.7L266.3 169.4M257.5 173.7L256.1 182.7M257.5 173.7L265.3 181.2M266.3 169.4L275.7 166.1M266.3 169.4L265.3 181.2M266.3 169.4L275.6 176.2M275.7 166.1L286.8 164.9M275.7 166.1L275.6 176.2M275.7 166.1L284.8 174.6M286.8 164.9L294.7 160.6M286.8 164.9L284.8 174.6M286.8 164.9L292.3 171.0M294.7 160.6L304.7 159.2M294.7 160.6L292.3 171.0M294.7 160.6L302.2 167.5M304.7 159.2L315.1 156.4M304.7 159.2L302.2 167.5M304.7 159.2L312.4 166.8M315.1 156.4L323.9 151.9M315.1 156.4L312.4 166.8M315.1 156.4L321.3 163.8M323.9 151.9L332.8 149.2M323.9 151.9L321.3 163.8M323.9 151.9L331.7 159.0M332.8 149.2L342.5 147.3M332.8 149.2L331.7 159.0M332.8 149.2L341.6 157.4M342.5 147.3L351.1 143.7M342.5 147.3L341.6 157.4M342.5 147.3L351.2 154.8M351.1 143.7L362.0 140.2M351.1 143.7L351.2 154.8M351.1 143.7L360.1 151.0M362.0 140.2L371.4 139.6M362.0 140.2L360.1 151.0M362.0 140.2L369.7 149.7M371.4 139.6L381.2 135.5M371.4 139.6L369.7 149.7M371.4 139.6L379.3 145.5M381.2 135.5L389.6 133.1M381.2 135.5L379.3 145.5M381.2 135.5L388.5 142.8M389.6 133.1L399.2 131.3M389.6 133.1L388.5 142.8M389.6 133.1L396.2 138.8M399.2 131.3L408.7 126.7M399.2 131.3L396.2 138.8M399.2 131.3L405.6 136.4M408.7 126.7L418.5 124.3M408.7 126.7L405.6 136.4M408.7 126.7L415.2 134.3M418.5 124.3L415.2 134.3M199.4 200.6L207.2 197.8M199.4 200.6L206.6 207.3M207.2 197.8L218.4 194.2M207.2 197.8L206.6 207.3M207.2 197.8L215.4 204.7M218.4 194.2L227.5 191.3M218.4 194.2L215.4 204.7M218.4 194.2L224.5 201.4M227.5 191.3L236.0 188.6M227.5 191.3L224.5 201.4M227.5 191.3L235.2 198.3M236.0 188.6L245.1 185.7M236.0 188.6L235.2 198.3M236.0 188.6L243.2 196.8M245.1 185.7L256.1 182.7M245.1 185.7L243.2 196.8M245.1 185.7L254.1 192.5M256.1 182.7L265.3 181.2M256.1 182.7L254.1 192.5M256.1 182.7L262.6 190.1M265.3 181.2L275.6 176.2M265.3 181.2L262.6 190.1M265.3 181.2L272.7 186.4M275.6 176.2L284.8 174.6M275.6 176.2L272.7 186.4M275.6 176.2L280.6 183.5M284.8 174.6L292.3 171.0M284.8 174.6L280.6 183.5M284.8 174.6L292.1 180.5M292.3 171.0L302.2 167.5M292.3 171.0L292.1 180.5M292.3 171.0L300.8 177.8M302.2 167.5L312.4 166.8M302.2 167.5L300.8 177.8M302.2 167.5L309.6 174.8M312.4 166.8L321.3 163.8M312.4 166.8L309.6 174.8M312.4 166.8L319.6 172.0M321.3 163.8L331.7 159.0M321.3 163.8L319.6 172.0M321.3 163.8L328.1 168.9M331.7 159.0L341.6 157.4M331.7 159.0L328.1 168.9M331.7 159.0L337.9 167.1M341.6 157.4L351.2 154.8M341.6 157.4L337.9 167.1M341.6 157.4L347.1 163.0M351.2 154.8L360.1 151.0M351.2 154.8L347.1 163.0M351.2 154.8L357.6 161.1M360.1 151.0L369.7 149.7M360.1 151.0L357.6 161.1M360.1 151.0L367.7 157.3M369.7 149.7L379.3 145.5M369.7 149.7L367.7 157.3M369.7 149.7L376.4 155.4M379.3 145.5L388.5 142.8M379.3 145.5L376.4 155.4M379.3 145.5L384.9 154.0M388.5 142.8L396.2 138.8M388.5 142.8L384.9 154.0M388.5 142.8L394.9 148.9M396.2 138.8L405.6 136.4M396.2 138.8L394.9 148.9M396.2 138.8L405.0 146.2M405.6 136.4L415.2 134.3M405.6 136.4L405.0 146.2M405.6 136.4L414.9 143.8M415.2 134.3L414.9 143.8M415.2 134.3L423.1 140.2M206.6 207.3L215.4 204.7M206.6 207.3L204.2 216.7M206.6 207.3L213.9 214.3M215.4 204.7L224.5 201.4M215.4 204.7L213.9 214.3M215.4 204.7L223.8 211.0M224.5 201.4L235.2 198.3M224.5 201.4L223.8 211.0M224.5 201.4L231.5 208.0M235.2 198.3L243.2 196.8M235.2 198.3L231.5 208.0M235.2 198.3L242.5 206.1M243.2 196.8L254.1 192.5M243.2 196.8L242.5 206.1M243.2 196.8L250.8 201.8M254.1 192.5L262.6 190.1M254.1 192.5L250.8 201.8M254.1 192.5L261.2 201.2M262.6 190.1L272.7 186.4M262.6 190.1L261.2 201.2M262.6 190.1L270.5 195.9M272.7 186.4L280.6 183.5M272.7 186.4L270.5 195.9M272.7 186.4L278.5 193.2M280.6 183.5L292.1 180.5M280.6 183.5L278.5 193.2M280.6 183.5L288.4 190.2M292.1 180.5L300.8 177.8M292.1 180.5L288.4 190.2M292.1 180.5L297.6 189.0M300.8 177.8L309.6 174.8M300.8 177.8L297.6 189.0M300.8 177.8L309.4 184.9M309.6 174.8L319.6 172.0M309.6 174.8L309.4 184.9M309.6 174.8L319.1 182.8M319.6 172.0L328.1 168.9M319.6 172.0L319.1 182.8M319.6 172.0L328.1 181.0M328.1 168.9L337.9 167.1M328.1 168.9L328.1 181.0M328.1 168.9L338.0 175.9M337.9 167.1L347.1 163.0M337.9 167.1L338.0 175.9M337.9 167.1L345.9 174.5M347.1 163.0L357.6 161.1M347.1 163.0L345.9 174.5M347.1 163.0L357.1 170.3M357.6 161.1L367.7 157.3M357.6 161.1L357.1 170.3M357.6 161.1L364.9 169.4M367.7 157.3L376.4 155.4M367.7 157.3L364.9 169.4M367.7 157.3L373.9 165.3M376.4 155.4L384.9 154.0M376.4 155.4L373.9 165.3M376.4 155.4L384.0 163.2M384.9 154.0L394.9 148.9M384.9 154.0L384.0 163.2M384.9 154.0L395.1 159.0M394.9 148.9L405.0 146.2M394.9 148.9L395.1 159.0M394.9 148.9L404.1 157.6M405.0 146.2L414.9 143.8M405.0 146.2L404.1 157.6M405.0 146.2L413.9 154.3M414.9 143.8L423.1 140.2M414.9 143.8L413.9 154.3M414.9 143.8L423.6 150.9M423.1 140.2L423.6 150.9M204.2 216.7L213.9 214.3M204.2 216.7L210.4 223.7M213.9 214.3L223.8 211.0M213.9 214.3L210.4 223.7M213.9 214.3L220.9 221.5M223.8 211.0L231.5 208.0M223.8 211.0L220.9 221.5M223.8 211.0L229.2 217.8M231.5 208.0L242.5 206.1M231.5 208.0L229.2 217.8M231.5 208.0L239.9 216.1M242.5 206.1L250.8 201.8M242.5 206.1L239.9 216.1M242.5 206.1L249.4 212.6M250.8 201.8L261.2 201.2M250.8 201.8L249.4 212.6M250.8 201.8L258.4 209.2M261.2 201.2L270.5 195.9M261.2 201.2L258.4 209.2M261.2 201.2L268.6 205.9M270.5 195.9L278.5 193.2M270.5 195.9L268.6 205.9M270.5 195.9L277.5 205.0M278.5 193.2L288.4 190.2M278.5 193.2L277.5 205.0M278.5 193.2L287.6 200.4M288.4 190.2L297.6 189.0M288.4 190.2L287.6 200.4M288.4 190.2L296.0 199.5M297.6 189.0L309.4 184.9M297.6 189.0L296.0 199.5M297.6 189.0L306.6 196.7M309.4 184.9L319.1 182.8M309.4 184.9L306.6 196.7M309.4 184.9L316.8 192.7M319.1 182.8L328.1 181.0M319.1 182.8L316.8 192.7M319.1 182.8L326.4 190.5M328.1 181.0L338.0 175.9M328.1 181.0L326.4 190.5M328.1 181.0L334.5 186.7M338.0 175.9L345.9 174.5M338.0 175.9L334.5 186.7M338.0 175.9L343.4 183.9M345.9 174.5L357.1 170.3M345.9 174.5L343.4 183.9M345.9 174.5L355.2 180.3M357.1 170.3L364.9 169.4M357.1 170.3L355.2 180.3M357.1 170.3L363.8 177.4M364.9 169.4L373.9 165.3M364.9 169.4L363.8 177.4M364.9 169.4L372.1 176.0M373.9 165.3L384.0 163.2M373.9 165.3L372.1 176.0M373.9 165.3L382.1 171.5M384.0 163.2L395.1 159.0M384.0 163.2L382.1 171.5M384.0 163.2L391.4 170.2M395.1 159.0L404.1 157.6M395.1 159.0L391.4 170.2M395.1 159.0L402.1 165.7M404.1 157.6L413.9 154.3M404.1 157.6L402.1 165.7M404.1 157.6L410.7 165.3M413.9 154.3L423.6 150.9M413.9 154.3L410.7 165.3M413.9 154.3L420.2 161.3M423.6 150.9L420.2 161.3M423.6 150.9L430.3 159.0M210.4 223.7L220.9 221.5M210.4 223.7L208.4 235.3M210.4 223.7L217.8 230.8M220.9 221.5L229.2 217.8M220.9 221.5L217.8 230.8M220.9 221.5L226.5 227.7M229.2 217.8L239.9 216.1M229.2 217.8L226.5 227.7M229.2 217.8L237.8 224.9M239.9 216.1L249.4 212.6M239.9 216.1L237.8 224.9M239.9 216.1L245.3 224.2M249.4 212.6L258.4 209.2M249.4 212.6L245.3 224.2M249.4 212.6L255.3 221.1M258.4 209.2L268.6 205.9M258.4 209.2L255.3 221.1M258.4 209.2L264.7 217.1M268.6 205.9L277.5 205.0M268.6 205.9L264.7 217.1M268.6 205.9L274.6 215.2M277.5 205.0L287.6 200.4M277.5 205.0L274.6 215.2M277.5 205.0L285.2 211.8M287.6 200.4L296.0 199.5M287.6 200.4L285.2 211.8M287.6 200.4L295.2 209.5M296.0 199.5L306.6 196.7M296.0 199.5L295.2 209.5M296.0 199.5L303.7 206.0M306.6 196.7L316.8 192.7M306.6 196.7L303.7 206.0M306.6 196.7L313.6 201.8M316.8 192.7L326.4 190.5M316.8 192.7L313.6 201.8M316.8 192.7L324.2 200.2M326.4 190.5L334.5 186.7M326.4 190.5L324.2 200.2M326.4 190.5L333.8 196.3M334.5 186.7L343.4 183.9M334.5 186.7L333.8 196.3M334.5 186.7L342.6 194.1M343.4 183.9L355.2 180.3M343.4 183.9L342.6 194.1M343.4 183.9L352.7 190.2M355.2 180.3L363.8 177.4M355.2 180.3L352.7 190.2M355.2 180.3L361.3 188.4M363.8 177.4L372.1 176.0M363.8 177.4L361.3 188.4M363.8 177.4L370.2 185.7M372.1 176.0L382.1 171.5M372.1 176.0L370.2 185.7M372.1 176.0L381.6 182.4M382.1 171.5L391.4 170.2M382.1 171.5L381.6 182.4M382.1 171.5L390.9 180.0M391.4 170.2L402.1 165.7M391.4 170.2L390.9 180.0M391.4 170.2L399.4 176.5M402.1 165.7L410.7 165.3M402.1 165.7L399.4 176.5M402.1 165.7L411.0 173.6M410.7 165.3L420.2 161.3M410.7 165.3L411.0 173.6M410.7 165.3L419.2 170.0M420.2 161.3L430.3 159.0M420.2 161.3L419.2 170.0M420.2 161.3L428.2 167.4M430.3 159.0L428.2 167.4M208.4 235.3L217.8 230.8M208.4 235.3L216.3 242.3M217.8 230.8L226.5 227.7M217.8 230.8L216.3 242.3M217.8 230.8L225.8 240.1M226.5 227.7L237.8 224.9M226.5 227.7L225.8 240.1M226.5 227.7L234.8 237.1M237.8 224.9L245.3 224.2M237.8 224.9L234.8 237.1M237.8 224.9L244.2 232.8M245.3 224.2L255.3 221.1M245.3 224.2L244.2 232.8M245.3 224.2L254.9 231.2M255.3 221.1L264.7 217.1M255.3 221.1L254.9 231.2M255.3 221.1L264.6 227.2M264.7 217.1L274.6 215.2M264.7 217.1L264.6 227.2M264.7 217.1L273.8 224.1M274.6 215.2L285.2 211.8M274.6 215.2L273.8 224.1M274.6 215.2L284.0 222.6M285.2 211.8L295.2 209.5M285.2 211.8L284.0 222.6M285.2 211.8L291.8 219.7M295.2 209.5L303.7 206.0M295.2 209.5L291.8 219.7M295.2 209.5L301.2 214.7M303.7 206.0L313.6 201.8M303.7 206.0L301.2 214.7M303.7 206.0L312.2 212.3M313.6 201.8L324.2 200.2M313.6 201.8L312.2 212.3M313.6 201.8L321.3 210.3M324.2 200.2L333.8 196.3M324.2 200.2L321.3 210.3M324.2 200.2L329.7 207.7M333.8 196.3L342.6 194.1M333.8 196.3L329.7 207.7M333.8 196.3L340.0 204.0M342.6 194.1L352.7 190.2M342.6 194.1L340.0 204.0M342.6 194.1L349.8 201.9M352.7 190.2L361.3 188.4M352.7 190.2L349.8 201.9M352.7 190.2L360.5 197.8M361.3 188.4L370.2 185.7M361.3 188.4L360.5 197.8M361.3 188.4L368.5 195.0M370.2 185.7L381.6 182.4M370.2 185.7L368.5 195.0M370.2 185.7L378.9 191.5M381.6 182.4L390.9 180.0M381.6 182.4L378.9 191.5M381.6 182.4L387.9 190.4M390.9 180.0L399.4 176.5M390.9 180.0L387.9 190.4M390.9 180.0L398.9 188.1M399.4 176.5L411.0 173.6M399.4 176.5L398.9 188.1M399.4 176.5L409.3 184.9M411.0 173.6L419.2 170.0M411.0 173.6L409.3 184.9M411.0 173.6L417.4 180.2M419.2 170.0L428.2 167.4M419.2 170.0L417.4 180.2M419.2 170.0L426.9 178.1M428.2 167.4L426.9 178.1M428.2 167.4L437.0 175.4M216.3 242.3L225.8 240.1M216.3 242.3L212.3 252.7M216.3 242.3L221.8 248.8M225.8 240.1L234.8 237.1M225.8 240.1L221.8 248.8M225.8 240.1L233.0 246.8M234.8 237.1L244.2 232.8M234.8 237.1L233.0 246.8M234.8 237.1L241.2 242.4M244.2 232.8L254.9 231.2M244.2 232.8L241.2 242.4M244.2 232.8L252.2 238.9M254.9 231.2L264.6 227.2M254.9 231.2L252.2 238.9M254.9 231.2L260.1 237.4M264.6 227.2L273.8 224.1M264.6 227.2L260.1 237.4M264.6 227.2L270.8 233.6M273.8 224.1L284.0 222.6M273.8 224.1L270.8 233.6M273.8 224.1L279.3 230.8M284.0 222.6L291.8 219.7M284.0 222.6L279.3 230.8M284.0 222.6L290.8 228.5M291.8 219.7L301.2 214.7M291.8 219.7L290.8 228.5M291.8 219.7L301.0 226.5M301.2 214.7L312.2 212.3M301.2 214.7L301.0 226.5M301.2 214.7L310.7 221.6M312.2 212.3L321.3 210.3M312.2 212.3L310.7 221.6M312.2 212.3L318.3 218.7M321.3 210.3L329.7 207.7M321.3 210.3L318.3 218.7M321.3 210.3L328.7 216.6M329.7 207.7L340.0 204.0M329.7 207.7L328.7 216.6M329.7 207.7L337.4 214.3M340.0 204.0L349.8 201.9M340.0 204.0L337.4 214.3M340.0 204.0L347.2 210.8M349.8 201.9L360.5 197.8M349.8 201.9L347.2 210.8M349.8 201.9L357.2 209.2M360.5 197.8L368.5 195.0M360.5 197.8L357.2 209.2M360.5 197.8L367.4 204.9M368.5 195.0L378.9 191.5M368.5 195.0L367.4 204.9M368.5 195.0L376.1 202.4M378.9 191.5L387.9 190.4M378.9 191.5L376.1 202.4M378.9 191.5L387.3 200.1M387.9 190.4L398.9 188.1M387.9 190.4L387.3 200.1M387.9 190.4L397.7 197.6M398.9 188.1L409.3 184.9M398.9 188.1L397.7 197.6M398.9 188.1L405.7 192.9M409.3 184.9L417.4 180.2M409.3 184.9L405.7 192.9M409.3 184.9L416.7 191.8M417.4 180.2L426.9 178.1M417.4 180.2L416.7 191.8M417.4 180.2L425.7 189.0M426.9 178.1L437.0 175.4M426.9 178.1L425.7 189.0M426.9 178.1L435.5 184.6M437.0 175.4L435.5 184.6M212.3 252.7L221.8 248.8M212.3 252.7L218.9 257.7M221.8 248.8L233.0 246.8M221.8 248.8L218.9 257.7M221.8 248.8L229.8 257.1M233.0 246.8L241.2 242.4M233.0 246.8L229.8 257.1M233.0 246.8L240.3 253.1M241.2 242.4L252.2 238.9M241.2 242.4L240.3 253.1M241.2 242.4L249.4 251.4M252.2 238.9L260.1 237.4M252.2 238.9L249.4 251.4M252.2 238.9L259.5 247.6M260.1 237.4L270.8 233.6M260.1 237.4L259.5 247.6M260.1 237.4L268.2 244.5M270.8 233.6L279.3 230.8M270.8 233.6L268.2 244.5M270.8 233.6L277.2 240.7M279.3 230.8L290.8 228.5M279.3 230.8L277.2 240.7M279.3 230.8L288.3 239.9M290.8 228.5L301.0 226.5M290.8 228.5L288.3 239.9M290.8 228.5L297.7 235.5M301.0 226.5L310.7 221.6M301.0 226.5L297.7 235.5M301.0 226.5L306.9 232.7M310.7 221.6L318.3 218.7M310.7 221.6L306.9 232.7M310.7 221.6L317.8 229.8M318.3 218.7L328.7 216.6M318.3 218.7L317.8 229.8M318.3 218.7L327.9 226.2M328.7 216.6L337.4 214.3M328.7 216.6L327.9 226.2M328.7 216.6L336.0 224.2M337.4 214.3L347.2 210.8M337.4 214.3L336.0 224.2M337.4 214.3L346.0 222.2M347.2 210.8L357.2 209.2M347.2 210.8L346.0 222.2M347.2 210.8L356.8 219.5M357.2 209.2L367.4 204.9M357.2 209.2L356.8 219.5M357.2 209.2L365.9 214.2M367.4 204.9L376.1 202.4M367.4 204.9L365.9 214.2M367.4 204.9L375.6 212.7M376.1 202.4L387.3 200.1M376.1 202.4L375.6 212.7M376.1 202.4L385.1 209.1M387.3 200.1L397.7 197.6M387.3 200.1L385.1 209.1M387.3 200.1L395.4 207.8M397.7 197.6L405.7 192.9M397.7 197.6L395.4 207.8M397.7 197.6L403.5 204.3M405.7 192.9L416.7 191.8M405.7 192.9L403.5 204.3M405.7 192.9L413.9 201.0M416.7 191.8L425.7 189.0M416.7 191.8L413.9 201.0M416.7 191.8L425.0 199.2M425.7 189.0L435.5 184.6M425.7 189.0L425.0 199.2M425.7 189.0L434.1 194.4M435.5 184.6L434.1 194.4M435.5 184.6L444.5 191.4M218.9 257.7L229.8 257.1M229.8 257.1L240.3 253.1M240.3 253.1L249.4 251.4M249.4 251.4L259.5 247.6M259.5 247.6L268.2 244.5M268.2 244.5L277.2 240.7M277.2 240.7L288.3 239.9M288.3 239.9L297.7 235.5M297.7 235.5L306.9 232.7M306.9 232.7L317.8 229.8M317.8 229.8L327.9 226.2M327.9 226.2L336.0 224.2M336.0 224.2L346.0 222.2M346.0 222.2L356.8 219.5M356.8 219.5L365.9 214.2M365.9 214.2L375.6 212.7M375.6 212.7L385.1 209.1M385.1 209.1L395.4 207.8M395.4 207.8L403.5 204.3M403.5 204.3L413.9 201.0M413.9 201.0L425.0 199.2M425.0 199.2L434.1 194.4M434.1 194.4L444.5 191.4" stroke="#141414" stroke-width="1.0" fill="none" clip-path="url(#ct)"/><ellipse cx="298" cy="147.5" rx="22" ry="19" fill="#a0a0a0"/><path d="M278.8 124.8L281.6 124.3M278.8 124.8L277.5 128.9M278.8 124.8L281.4 128.3M281.6 124.3L285.5 122.5M281.6 124.3L281.4 128.3M281.6 124.3L285.1 127.1M285.5 122.5L290.0 121.4M285.5 122.5L285.1 127.1M285.5 122.5L288.8 126.3M290.0 121.4L293.7 120.3M290.0 121.4L288.8 126.3M290.0 121.4L292.3 125.4M293.7 120.3L296.8 119.1M293.7 120.3L292.3 125.4M293.7 120.3L296.0 124.2M296.8 119.1L300.8 118.3M296.8 119.1L296.0 124.2M296.8 119.1L299.8 123.0M300.8 118.3L299.8 123.0M300.8 118.3L303.6 121.1M273.7 130.4L277.5 128.9M273.7 130.4L273.1 134.9M273.7 130.4L276.9 134.1M277.5 128.9L281.4 128.3M277.5 128.9L276.9 134.1M277.5 128.9L280.5 132.6M281.4 128.3L285.1 127.1M281.4 128.3L280.5 132.6M281.4 128.3L284.7 131.9M285.1 127.1L288.8 126.3M285.1 127.1L284.7 131.9M285.1 127.1L288.0 130.1M288.8 126.3L292.3 125.4M288.8 126.3L288.0 130.1M288.8 126.3L292.4 129.6M292.3 125.4L296.0 124.2M292.3 125.4L292.4 129.6M292.3 125.4L295.8 128.1M296.0 124.2L299.8 123.0M296.0 124.2L295.8 128.1M296.0 124.2L299.9 127.0M299.8 123.0L303.6 121.1M299.8 123.0L299.9 127.0M299.8 123.0L302.9 125.6M303.6 121.1L307.6 120.8M303.6 121.1L302.9 125.6M303.6 121.1L306.8 125.0M307.6 120.8L306.8 125.0M307.6 120.8L310.5 124.2M273.1 134.9L276.9 134.1M273.1 134.9L272.2 139.0M273.1 134.9L276.6 138.4M276.9 134.1L280.5 132.6M276.9 134.1L276.6 138.4M276.9 134.1L279.7 137.4M280.5 132.6L284.7 131.9M280.5 132.6L279.7 137.4M280.5 132.6L283.9 135.6M284.7 131.9L288.0 130.1M284.7 131.9L283.9 135.6M284.7 131.9L287.8 134.6M288.0 130.1L292.4 129.6M288.0 130.1L287.8 134.6M288.0 130.1L291.7 133.4M292.4 129.6L295.8 128.1M292.4 129.6L291.7 133.4M292.4 129.6L294.8 132.4M295.8 128.1L299.9 127.0M295.8 128.1L294.8 132.4M295.8 128.1L299.1 131.9M299.9 127.0L302.9 125.6M299.9 127.0L299.1 131.9M299.9 127.0L302.6 130.1M302.9 125.6L306.8 125.0M302.9 125.6L302.6 130.1M302.9 125.6L306.2 129.5M306.8 125.0L310.5 124.2M306.8 125.0L306.2 129.5M306.8 125.0L309.6 128.6M310.5 124.2L314.6 122.6M310.5 124.2L309.6 128.6M310.5 124.2L314.1 127.5M314.6 122.6L314.1 127.5M314.6 122.6L317.7 126.0M272.2 139.0L276.6 138.4M272.2 139.0L272.1 143.7M272.2 139.0L275.3 142.9M276.6 138.4L279.7 137.4M276.6 138.4L275.3 142.9M276.6 138.4L279.0 141.9M279.7 137.4L283.9 135.6M279.7 137.4L279.0 141.9M279.7 137.4L283.1 140.8M283.9 135.6L287.8 134.6M283.9 135.6L283.1 140.8M283.9 135.6L286.7 139.1M287.8 134.6L291.7 133.4M287.8 134.6L286.7 139.1M287.8 134.6L291.0 138.4M291.7 133.4L294.8 132.4M291.7 133.4L291.0 138.4M291.7 133.4L294.2 137.2M294.8 132.4L299.1 131.9M294.8 132.4L294.2 137.2M294.8 132.4L298.0 136.1M299.1 131.9L302.6 130.1M299.1 131.9L298.0 136.1M299.1 131.9L301.8 134.6M302.6 130.1L306.2 129.5M302.6 130.1L301.8 134.6M302.6 130.1L306.1 134.1M306.2 129.5L309.6 128.6M306.2 129.5L306.1 134.1M306.2 129.5L309.6 132.4M309.6 128.6L314.1 127.5M309.6 128.6L309.6 132.4M309.6 128.6L312.8 131.7M314.1 127.5L317.7 126.0M314.1 127.5L312.8 131.7M314.1 127.5L317.1 130.5M317.7 126.0L317.1 130.5M317.7 126.0L320.3 129.4M268.4 145.5L272.1 143.7M268.4 145.5L270.7 148.7M272.1 143.7L275.3 142.9M272.1 143.7L270.7 148.7M272.1 143.7L274.5 146.9M275.3 142.9L279.0 141.9M275.3 142.9L274.5 146.9M275.3 142.9L278.9 145.6M279.0 141.9L283.1 140.8M279.0 141.9L278.9 145.6M279.0 141.9L282.4 145.3M283.1 140.8L286.7 139.1M283.1 140.8L282.4 145.3M283.1 140.8L286.2 143.6M286.7 139.1L291.0 138.4M286.7 139.1L286.2 143.6M286.7 139.1L290.2 143.0M291.0 138.4L294.2 137.2M291.0 138.4L290.2 143.0M291.0 138.4L293.7 141.7M294.2 137.2L298.0 136.1M294.2 137.2L293.7 141.7M294.2 137.2L297.2 140.3M298.0 136.1L301.8 134.6M298.0 136.1L297.2 140.3M298.0 136.1L301.6 139.7M301.8 134.6L306.1 134.1M301.8 134.6L301.6 139.7M301.8 134.6L304.4 137.8M306.1 134.1L309.6 132.4M306.1 134.1L304.4 137.8M306.1 134.1L308.4 137.3M309.6 132.4L312.8 131.7M309.6 132.4L308.4 137.3M309.6 132.4L312.1 135.6M312.8 131.7L317.1 130.5M312.8 131.7L312.1 135.6M312.8 131.7L316.4 134.4M317.1 130.5L320.3 129.4M317.1 130.5L316.4 134.4M317.1 130.5L320.4 133.6M320.3 129.4L320.4 133.6M320.3 129.4L324.0 132.8M270.7 148.7L274.5 146.9M270.7 148.7L270.4 152.3M270.7 148.7L274.7 151.7M274.5 146.9L278.9 145.6M274.5 146.9L274.7 151.7M274.5 146.9L278.2 150.8M278.9 145.6L282.4 145.3M278.9 145.6L278.2 150.8M278.9 145.6L281.5 149.7M282.4 145.3L286.2 143.6M282.4 145.3L281.5 149.7M282.4 145.3L285.9 148.0M286.2 143.6L290.2 143.0M286.2 143.6L285.9 148.0M286.2 143.6L288.9 147.4M290.2 143.0L293.7 141.7M290.2 143.0L288.9 147.4M290.2 143.0L293.4 146.3M293.7 141.7L297.2 140.3M293.7 141.7L293.4 146.3M293.7 141.7L296.6 144.9M297.2 140.3L301.6 139.7M297.2 140.3L296.6 144.9M297.2 140.3L300.1 143.4M301.6 139.7L304.4 137.8M301.6 139.7L300.1 143.4M301.6 139.7L304.1 142.8M304.4 137.8L308.4 137.3M304.4 137.8L304.1 142.8M304.4 137.8L307.6 141.9M308.4 137.3L312.1 135.6M308.4 137.3L307.6 141.9M308.4 137.3L311.3 140.8M312.1 135.6L316.4 134.4M312.1 135.6L311.3 140.8M312.1 135.6L315.2 139.5M316.4 134.4L320.4 133.6M316.4 134.4L315.2 139.5M316.4 134.4L319.5 138.5M320.4 133.6L324.0 132.8M320.4 133.6L319.5 138.5M320.4 133.6L322.9 137.2M324.0 132.8L322.9 137.2M270.4 152.3L274.7 151.7M270.4 152.3L269.8 157.3M270.4 152.3L274.0 156.3M274.7 151.7L278.2 150.8M274.7 151.7L274.0 156.3M274.7 151.7L277.6 154.5M278.2 150.8L281.5 149.7M278.2 150.8L277.6 154.5M278.2 150.8L281.3 153.9M281.5 149.7L285.9 148.0M281.5 149.7L281.3 153.9M281.5 149.7L285.2 152.1M285.9 148.0L288.9 147.4M285.9 148.0L285.2 152.1M285.9 148.0L288.2 152.0M288.9 147.4L293.4 146.3M288.9 147.4L288.2 152.0M288.9 147.4L292.2 150.6M293.4 146.3L296.6 144.9M293.4 146.3L292.2 150.6M293.4 146.3L296.1 149.2M296.6 144.9L300.1 143.4M296.6 144.9L296.1 149.2M296.6 144.9L299.7 148.2M300.1 143.4L304.1 142.8M300.1 143.4L299.7 148.2M300.1 143.4L304.0 147.0M304.1 142.8L307.6 141.9M304.1 142.8L304.0 147.0M304.1 142.8L307.6 145.7M307.6 141.9L311.3 140.8M307.6 141.9L307.6 145.7M307.6 141.9L311.3 144.9M311.3 140.8L315.2 139.5M311.3 140.8L311.3 144.9M311.3 140.8L315.0 144.0M315.2 139.5L319.5 138.5M315.2 139.5L315.0 144.0M315.2 139.5L318.1 143.0M319.5 138.5L322.9 137.2M319.5 138.5L318.1 143.0M319.5 138.5L322.4 141.1M322.9 137.2L322.4 141.1M322.9 137.2L326.0 139.9M269.8 157.3L274.0 156.3M269.8 157.3L273.0 160.5M274.0 156.3L277.6 154.5M274.0 156.3L273.0 160.5M274.0 156.3L276.6 159.6M277.6 154.5L281.3 153.9M277.6 154.5L276.6 159.6M277.6 154.5L280.1 158.4M281.3 153.9L285.2 152.1M281.3 153.9L280.1 158.4M281.3 153.9L284.6 156.6M285.2 152.1L288.2 152.0M285.2 152.1L284.6 156.6M285.2 152.1L287.6 156.4M288.2 152.0L292.2 150.6M288.2 152.0L287.6 156.4M288.2 152.0L291.2 155.1M292.2 150.6L296.1 149.2M292.2 150.6L291.2 155.1M292.2 150.6L295.5 153.3M296.1 149.2L299.7 148.2M296.1 149.2L295.5 153.3M296.1 149.2L299.3 152.1M299.7 148.2L304.0 147.0M299.7 148.2L299.3 152.1M299.7 148.2L303.2 151.2M304.0 147.0L307.6 145.7M304.0 147.0L303.2 151.2M304.0 147.0L307.0 150.7M307.6 145.7L311.3 144.9M307.6 145.7L307.0 150.7M307.6 145.7L310.0 149.1M311.3 144.9L315.0 144.0M311.3 144.9L310.0 149.1M311.3 144.9L313.8 148.3M315.0 144.0L318.1 143.0M315.0 144.0L313.8 148.3M315.0 144.0L317.5 146.5M318.1 143.0L322.4 141.1M318.1 143.0L317.5 146.5M318.1 143.0L321.2 146.2M322.4 141.1L326.0 139.9M322.4 141.1L321.2 146.2M322.4 141.1L325.1 144.5M326.0 139.9L325.1 144.5M273.0 160.5L276.6 159.6M273.0 160.5L275.5 164.1M276.6 159.6L280.1 158.4M276.6 159.6L275.5 164.1M276.6 159.6L279.6 162.1M280.1 158.4L284.6 156.6M280.1 158.4L279.6 162.1M280.1 158.4L283.7 161.9M284.6 156.6L287.6 156.4M284.6 156.6L283.7 161.9M284.6 156.6L286.7 160.3M287.6 156.4L291.2 155.1M287.6 156.4L286.7 160.3M287.6 156.4L291.4 159.1M291.2 155.1L295.5 153.3M291.2 155.1L291.4 159.1M291.2 155.1L294.5 158.4M295.5 153.3L299.3 152.1M295.5 153.3L294.5 158.4M295.5 153.3L298.4 157.5M299.3 152.1L303.2 151.2M299.3 152.1L298.4 157.5M299.3 152.1L302.6 156.2M303.2 151.2L307.0 150.7M303.2 151.2L302.6 156.2M303.2 151.2L306.2 154.4M307.0 150.7L310.0 149.1M307.0 150.7L306.2 154.4M307.0 150.7L309.9 153.7M310.0 149.1L313.8 148.3M310.0 149.1L309.9 153.7M310.0 149.1L313.4 152.6M313.8 148.3L317.5 146.5M313.8 148.3L313.4 152.6M313.8 148.3L317.0 151.1M317.5 146.5L321.2 146.2M317.5 146.5L317.0 151.1M317.5 146.5L321.4 150.1M321.2 146.2L325.1 144.5M321.2 146.2L321.4 150.1M321.2 146.2L324.3 149.6M325.1 144.5L324.3 149.6M275.5 164.1L279.6 162.1M275.5 164.1L279.2 166.6M279.6 162.1L283.7 161.9M279.6 162.1L279.2 166.6M279.6 162.1L282.5 165.8M283.7 161.9L286.7 160.3M283.7 161.9L282.5 165.8M283.7 161.9L286.5 164.6M286.7 160.3L291.4 159.1M286.7 160.3L286.5 164.6M286.7 160.3L290.4 163.4M291.4 159.1L294.5 158.4M291.4 159.1L290.4 163.4M291.4 159.1L294.4 162.4M294.5 158.4L298.4 157.5M294.5 158.4L294.4 162.4M294.5 158.4L297.5 161.0M298.4 157.5L302.6 156.2M298.4 157.5L297.5 161.0M298.4 157.5L301.2 160.0M302.6 156.2L306.2 154.4M302.6 156.2L301.2 160.0M302.6 156.2L305.7 159.1M306.2 154.4L309.9 153.7M306.2 154.4L305.7 159.1M306.2 154.4L309.0 158.5M309.9 153.7L313.4 152.6M309.9 153.7L309.0 158.5M309.9 153.7L313.2 157.2M313.4 152.6L317.0 151.1M313.4 152.6L313.2 157.2M313.4 152.6L316.3 155.6M317.0 151.1L321.4 150.1M317.0 151.1L316.3 155.6M317.0 151.1L320.3 154.4M321.4 150.1L324.3 149.6M321.4 150.1L320.3 154.4M321.4 150.1L323.9 153.3M324.3 149.6L323.9 153.3M324.3 149.6L327.5 152.7M279.2 166.6L282.5 165.8M279.2 166.6L282.1 170.0M282.5 165.8L286.5 164.6M282.5 165.8L282.1 170.0M282.5 165.8L285.6 169.5M286.5 164.6L290.4 163.4M286.5 164.6L285.6 169.5M286.5 164.6L289.4 167.8M290.4 163.4L294.4 162.4M290.4 163.4L289.4 167.8M290.4 163.4L293.1 167.0M294.4 162.4L297.5 161.0M294.4 162.4L293.1 167.0M294.4 162.4L297.0 165.7M297.5 161.0L301.2 160.0M297.5 161.0L297.0 165.7M297.5 161.0L300.7 164.4M301.2 160.0L305.7 159.1M301.2 160.0L300.7 164.4M301.2 160.0L304.6 163.7M305.7 159.1L309.0 158.5M305.7 159.1L304.6 163.7M305.7 159.1L307.9 162.6M309.0 158.5L313.2 157.2M309.0 158.5L307.9 162.6M309.0 158.5L311.9 161.8M313.2 157.2L316.3 155.6M313.2 157.2L311.9 161.8M313.2 157.2L316.3 159.9M316.3 155.6L320.3 154.4M316.3 155.6L316.3 159.9M316.3 155.6L319.8 158.9M320.3 154.4L323.9 153.3M320.3 154.4L319.8 158.9M320.3 154.4L323.0 158.4M323.9 153.3L327.5 152.7M323.9 153.3L323.0 158.4M282.1 170.0L285.6 169.5M282.1 170.0L284.7 174.0M285.6 169.5L289.4 167.8M285.6 169.5L284.7 174.0M285.6 169.5L288.7 172.7M289.4 167.8L293.1 167.0M289.4 167.8L288.7 172.7M289.4 167.8L292.5 171.7M293.1 167.0L297.0 165.7M293.1 167.0L292.5 171.7M293.1 167.0L296.3 170.4M297.0 165.7L300.7 164.4M297.0 165.7L296.3 170.4M297.0 165.7L300.0 169.5M300.7 164.4L304.6 163.7M300.7 164.4L300.0 169.5M300.7 164.4L304.2 167.7M304.6 163.7L307.9 162.6M304.6 163.7L304.2 167.7M304.6 163.7L307.9 167.3M307.9 162.6L311.9 161.8M307.9 162.6L307.9 167.3M307.9 162.6L311.2 165.5M311.9 161.8L316.3 159.9M311.9 161.8L311.2 165.5M311.9 161.8L315.6 165.1M316.3 159.9L319.8 158.9M316.3 159.9L315.6 165.1M316.3 159.9L318.6 163.8M319.8 158.9L323.0 158.4M319.8 158.9L318.6 163.8M319.8 158.9L323.1 162.2M323.0 158.4L323.1 162.2M284.7 174.0L288.7 172.7M288.7 172.7L292.5 171.7M288.7 172.7L291.7 175.7M292.5 171.7L296.3 170.4M292.5 171.7L291.7 175.7M292.5 171.7L295.8 174.6M296.3 170.4L300.0 169.5M296.3 170.4L295.8 174.6M296.3 170.4L299.6 173.9M300.0 169.5L304.2 167.7M300.0 169.5L299.6 173.9M300.0 169.5L303.4 172.8M304.2 167.7L307.9 167.3M304.2 167.7L303.4 172.8M304.2 167.7L306.8 171.7M307.9 167.3L311.2 165.5M307.9 167.3L306.8 171.7M307.9 167.3L311.2 170.2M311.2 165.5L315.6 165.1M311.2 165.5L311.2 170.2M311.2 165.5L314.0 168.7M315.6 165.1L318.6 163.8M315.6 165.1L314.0 168.7M315.6 165.1L318.5 168.3M318.6 163.8L323.1 162.2M318.6 163.8L318.5 168.3M291.7 175.7L295.8 174.6M295.8 174.6L299.6 173.9M299.6 173.9L303.4 172.8M303.4 172.8L306.8 171.7M303.4 172.8L306.1 176.1M306.8 171.7L311.2 170.2M306.8 171.7L306.1 176.1M306.8 171.7L310.5 174.7M311.2 170.2L314.0 168.7M311.2 170.2L310.5 174.7M311.2 170.2L313.3 173.2M314.0 168.7L318.5 168.3M314.0 168.7L313.3 173.2M306.1 176.1L310.5 174.7M310.5 174.7L313.3 173.2" stroke="#151515" stroke-width="0.8" fill="none" clip-path="url(#cc1)"/><path d="M289.3 134.5L291.5 133.5M289.3 134.5L289.1 136.5M289.3 134.5L290.9 136.0M291.5 133.5L293.3 133.5M291.5 133.5L290.9 136.0M291.5 133.5L292.8 135.5M293.3 133.5L295.2 132.9M293.3 133.5L292.8 135.5M293.3 133.5L294.7 134.8M295.2 132.9L297.0 132.1M295.2 132.9L294.7 134.8M295.2 132.9L296.5 134.3M297.0 132.1L296.5 134.3M297.0 132.1L298.4 133.5M287.2 137.0L289.1 136.5M287.2 137.0L286.8 139.3M287.2 137.0L288.5 138.9M289.1 136.5L290.9 136.0M289.1 136.5L288.5 138.9M289.1 136.5L290.8 138.3M290.9 136.0L292.8 135.5M290.9 136.0L290.8 138.3M290.9 136.0L292.3 137.9M292.8 135.5L294.7 134.8M292.8 135.5L292.3 137.9M292.8 135.5L294.4 136.9M294.7 134.8L296.5 134.3M294.7 134.8L294.4 136.9M294.7 134.8L296.4 136.8M296.5 134.3L298.4 133.5M296.5 134.3L296.4 136.8M296.5 134.3L298.3 136.3M298.4 133.5L300.4 133.3M298.4 133.5L298.3 136.3M298.4 133.5L300.0 135.1M300.4 133.3L302.0 132.9M300.4 133.3L300.0 135.1M300.4 133.3L302.1 135.0M302.0 132.9L302.1 135.0M302.0 132.9L304.0 134.6M285.0 139.7L286.8 139.3M285.0 139.7L284.6 142.3M285.0 139.7L286.5 141.3M286.8 139.3L288.5 138.9M286.8 139.3L286.5 141.3M286.8 139.3L288.1 141.2M288.5 138.9L290.8 138.3M288.5 138.9L288.1 141.2M288.5 138.9L290.2 140.5M290.8 138.3L292.3 137.9M290.8 138.3L290.2 140.5M290.8 138.3L292.0 139.7M292.3 137.9L294.4 136.9M292.3 137.9L292.0 139.7M292.3 137.9L293.8 139.3M294.4 136.9L296.4 136.8M294.4 136.9L293.8 139.3M294.4 136.9L295.8 138.8M296.4 136.8L298.3 136.3M296.4 136.8L295.8 138.8M296.4 136.8L297.7 138.3M298.3 136.3L300.0 135.1M298.3 136.3L297.7 138.3M298.3 136.3L299.4 137.9M300.0 135.1L302.1 135.0M300.0 135.1L299.4 137.9M300.0 135.1L301.3 137.0M302.1 135.0L304.0 134.6M302.1 135.0L301.3 137.0M302.1 135.0L303.2 136.2M304.0 134.6L305.7 133.5M304.0 134.6L303.2 136.2M304.0 134.6L305.0 135.6M305.7 133.5L305.0 135.6M305.7 133.5L307.1 135.2M283.0 142.9L284.6 142.3M283.0 142.9L282.5 145.2M283.0 142.9L284.5 144.4M284.6 142.3L286.5 141.3M284.6 142.3L284.5 144.4M284.6 142.3L286.4 144.0M286.5 141.3L288.1 141.2M286.5 141.3L286.4 144.0M286.5 141.3L288.0 143.5M288.1 141.2L290.2 140.5M288.1 141.2L288.0 143.5M288.1 141.2L289.7 142.5M290.2 140.5L292.0 139.7M290.2 140.5L289.7 142.5M290.2 140.5L291.7 142.3M292.0 139.7L293.8 139.3M292.0 139.7L291.7 142.3M292.0 139.7L293.4 141.4M293.8 139.3L295.8 138.8M293.8 139.3L293.4 141.4M293.8 139.3L295.5 141.2M295.8 138.8L297.7 138.3M295.8 138.8L295.5 141.2M295.8 138.8L297.4 140.7M297.7 138.3L299.4 137.9M297.7 138.3L297.4 140.7M297.7 138.3L299.0 139.8M299.4 137.9L301.3 137.0M299.4 137.9L299.0 139.8M299.4 137.9L300.9 139.1M301.3 137.0L303.2 136.2M301.3 137.0L300.9 139.1M301.3 137.0L303.2 138.6M303.2 136.2L305.0 135.6M303.2 136.2L303.2 138.6M303.2 136.2L304.9 138.1M305.0 135.6L307.1 135.2M305.0 135.6L304.9 138.1M305.0 135.6L306.5 137.9M307.1 135.2L306.5 137.9M307.1 135.2L308.7 137.3M282.5 145.2L284.5 144.4M282.5 145.2L282.0 147.0M282.5 145.2L283.8 146.5M284.5 144.4L286.4 144.0M284.5 144.4L283.8 146.5M284.5 144.4L285.7 146.0M286.4 144.0L288.0 143.5M286.4 144.0L285.7 146.0M286.4 144.0L287.4 145.5M288.0 143.5L289.7 142.5M288.0 143.5L287.4 145.5M288.0 143.5L289.6 144.8M289.7 142.5L291.7 142.3M289.7 142.5L289.6 144.8M289.7 142.5L291.3 144.6M291.7 142.3L293.4 141.4M291.7 142.3L291.3 144.6M291.7 142.3L293.5 143.9M293.4 141.4L295.5 141.2M293.4 141.4L293.5 143.9M293.4 141.4L295.3 142.9M295.5 141.2L297.4 140.7M295.5 141.2L295.3 142.9M295.5 141.2L296.9 142.7M297.4 140.7L299.0 139.8M297.4 140.7L296.9 142.7M297.4 140.7L299.1 141.9M299.0 139.8L300.9 139.1M299.0 139.8L299.1 141.9M299.0 139.8L300.9 141.6M300.9 139.1L303.2 138.6M300.9 139.1L300.9 141.6M300.9 139.1L302.9 140.7M303.2 138.6L304.9 138.1M303.2 138.6L302.9 140.7M303.2 138.6L304.7 140.4M304.9 138.1L306.5 137.9M304.9 138.1L304.7 140.4M304.9 138.1L306.7 139.5M306.5 137.9L308.7 137.3M306.5 137.9L306.7 139.5M306.5 137.9L308.5 139.5M308.7 137.3L308.5 139.5M308.7 137.3L310.4 138.5M282.0 147.0L283.8 146.5M282.0 147.0L283.9 148.9M283.8 146.5L285.7 146.0M283.8 146.5L283.9 148.9M283.8 146.5L285.8 148.1M285.7 146.0L287.4 145.5M285.7 146.0L285.8 148.1M285.7 146.0L287.3 147.5M287.4 145.5L289.6 144.8M287.4 145.5L287.3 147.5M287.4 145.5L289.4 146.8M289.6 144.8L291.3 144.6M289.6 144.8L289.4 146.8M289.6 144.8L290.9 146.7M291.3 144.6L293.5 143.9M291.3 144.6L290.9 146.7M291.3 144.6L293.2 146.2M293.5 143.9L295.3 142.9M293.5 143.9L293.2 146.2M293.5 143.9L294.9 145.2M295.3 142.9L296.9 142.7M295.3 142.9L294.9 145.2M295.3 142.9L296.6 145.0M296.9 142.7L299.1 141.9M296.9 142.7L296.6 145.0M296.9 142.7L298.4 144.1M299.1 141.9L300.9 141.6M299.1 141.9L298.4 144.1M299.1 141.9L300.7 143.9M300.9 141.6L302.9 140.7M300.9 141.6L300.7 143.9M300.9 141.6L302.2 143.0M302.9 140.7L304.7 140.4M302.9 140.7L302.2 143.0M302.9 140.7L304.5 142.4M304.7 140.4L306.7 139.5M304.7 140.4L304.5 142.4M304.7 140.4L306.2 142.3M306.7 139.5L308.5 139.5M306.7 139.5L306.2 142.3M306.7 139.5L307.7 141.3M308.5 139.5L310.4 138.5M308.5 139.5L307.7 141.3M308.5 139.5L309.9 140.7M310.4 138.5L309.9 140.7M310.4 138.5L312.0 140.3M283.9 148.9L285.8 148.1M283.9 148.9L283.0 151.2M283.9 148.9L285.1 150.7M285.8 148.1L287.3 147.5M285.8 148.1L285.1 150.7M285.8 148.1L286.8 149.6M287.3 147.5L289.4 146.8M287.3 147.5L286.8 149.6M287.3 147.5L288.9 149.3M289.4 146.8L290.9 146.7M289.4 146.8L288.9 149.3M289.4 146.8L290.6 148.5M290.9 146.7L293.2 146.2M290.9 146.7L290.6 148.5M290.9 146.7L292.6 148.3M293.2 146.2L294.9 145.2M293.2 146.2L292.6 148.3M293.2 146.2L294.6 147.7M294.9 145.2L296.6 145.0M294.9 145.2L294.6 147.7M294.9 145.2L296.2 147.1M296.6 145.0L298.4 144.1M296.6 145.0L296.2 147.1M296.6 145.0L298.0 146.2M298.4 144.1L300.7 143.9M298.4 144.1L298.0 146.2M298.4 144.1L299.9 145.7M300.7 143.9L302.2 143.0M300.7 143.9L299.9 145.7M300.7 143.9L302.2 145.6M302.2 143.0L304.5 142.4M302.2 143.0L302.2 145.6M302.2 143.0L303.9 144.7M304.5 142.4L306.2 142.3M304.5 142.4L303.9 144.7M304.5 142.4L305.7 144.4M306.2 142.3L307.7 141.3M306.2 142.3L305.7 144.4M306.2 142.3L307.7 143.7M307.7 141.3L309.9 140.7M307.7 141.3L307.7 143.7M307.7 141.3L309.6 143.1M309.9 140.7L312.0 140.3M309.9 140.7L309.6 143.1M309.9 140.7L311.7 142.4M312.0 140.3L311.7 142.4M283.0 151.2L285.1 150.7M283.0 151.2L284.7 152.5M285.1 150.7L286.8 149.6M285.1 150.7L284.7 152.5M285.1 150.7L286.9 152.2M286.8 149.6L288.9 149.3M286.8 149.6L286.9 152.2M286.8 149.6L288.5 151.5M288.9 149.3L290.6 148.5M288.9 149.3L288.5 151.5M288.9 149.3L290.2 150.7M290.6 148.5L292.6 148.3M290.6 148.5L290.2 150.7M290.6 148.5L292.5 150.5M292.6 148.3L294.6 147.7M292.6 148.3L292.5 150.5M292.6 148.3L294.3 150.1M294.6 147.7L296.2 147.1M294.6 147.7L294.3 150.1M294.6 147.7L296.0 149.5M296.2 147.1L298.0 146.2M296.2 147.1L296.0 149.5M296.2 147.1L298.1 148.4M298.0 146.2L299.9 145.7M298.0 146.2L298.1 148.4M298.0 146.2L299.8 148.3M299.9 145.7L302.2 145.6M299.9 145.7L299.8 148.3M299.9 145.7L301.7 147.4M302.2 145.6L303.9 144.7M302.2 145.6L301.7 147.4M302.2 145.6L303.8 147.0M303.9 144.7L305.7 144.4M303.9 144.7L303.8 147.0M303.9 144.7L305.3 146.5M305.7 144.4L307.7 143.7M305.7 144.4L305.3 146.5M305.7 144.4L307.2 145.8M307.7 143.7L309.6 143.1M307.7 143.7L307.2 145.8M307.7 143.7L309.3 145.0M309.6 143.1L311.7 142.4M309.6 143.1L309.3 145.0M309.6 143.1L310.8 144.6M311.7 142.4L310.8 144.6M311.7 142.4L312.8 144.2M284.7 152.5L286.9 152.2M284.7 152.5L284.6 155.1M284.7 152.5L286.3 154.0M286.9 152.2L288.5 151.5M286.9 152.2L286.3 154.0M286.9 152.2L288.2 153.6M288.5 151.5L290.2 150.7M288.5 151.5L288.2 153.6M288.5 151.5L290.1 153.2M290.2 150.7L292.5 150.5M290.2 150.7L290.1 153.2M290.2 150.7L292.2 152.9M292.5 150.5L294.3 150.1M292.5 150.5L292.2 152.9M292.5 150.5L294.0 151.9M294.3 150.1L296.0 149.5M294.3 150.1L294.0 151.9M294.3 150.1L295.6 151.3M296.0 149.5L298.1 148.4M296.0 149.5L295.6 151.3M296.0 149.5L297.4 150.9M298.1 148.4L299.8 148.3M298.1 148.4L297.4 150.9M298.1 148.4L299.6 150.3M299.8 148.3L301.7 147.4M299.8 148.3L299.6 150.3M299.8 148.3L301.3 149.7M301.7 147.4L303.8 147.0M301.7 147.4L301.3 149.7M301.7 147.4L303.1 149.5M303.8 147.0L305.3 146.5M303.8 147.0L303.1 149.5M303.8 147.0L305.0 148.4M305.3 146.5L307.2 145.8M305.3 146.5L305.0 148.4M305.3 146.5L307.0 148.1M307.2 145.8L309.3 145.0M307.2 145.8L307.0 148.1M307.2 145.8L308.6 147.5M309.3 145.0L310.8 144.6M309.3 145.0L308.6 147.5M309.3 145.0L310.9 146.8M310.8 144.6L312.8 144.2M310.8 144.6L310.9 146.8M310.8 144.6L312.5 146.5M312.8 144.2L312.5 146.5M284.6 155.1L286.3 154.0M284.6 155.1L285.9 156.8M286.3 154.0L288.2 153.6M286.3 154.0L285.9 156.8M286.3 154.0L288.1 156.0M288.2 153.6L290.1 153.2M288.2 153.6L288.1 156.0M288.2 153.6L289.8 155.2M290.1 153.2L292.2 152.9M290.1 153.2L289.8 155.2M290.1 153.2L291.5 154.8M292.2 152.9L294.0 151.9M292.2 152.9L291.5 154.8M292.2 152.9L293.5 154.2M294.0 151.9L295.6 151.3M294.0 151.9L293.5 154.2M294.0 151.9L295.5 153.9M295.6 151.3L297.4 150.9M295.6 151.3L295.5 153.9M295.6 151.3L297.4 153.3M297.4 150.9L299.6 150.3M297.4 150.9L297.4 153.3M297.4 150.9L298.9 152.6M299.6 150.3L301.3 149.7M299.6 150.3L298.9 152.6M299.6 150.3L300.9 151.8M301.3 149.7L303.1 149.5M301.3 149.7L300.9 151.8M301.3 149.7L302.7 151.7M303.1 149.5L305.0 148.4M303.1 149.5L302.7 151.7M303.1 149.5L305.0 150.8M305.0 148.4L307.0 148.1M305.0 148.4L305.0 150.8M305.0 148.4L306.4 150.3M307.0 148.1L308.6 147.5M307.0 148.1L306.4 150.3M307.0 148.1L308.3 149.7M308.6 147.5L310.9 146.8M308.6 147.5L308.3 149.7M308.6 147.5L310.1 149.2M310.9 146.8L312.5 146.5M310.9 146.8L310.1 149.2M310.9 146.8L312.1 148.5M312.5 146.5L312.1 148.5M312.5 146.5L314.0 147.9M285.9 156.8L288.1 156.0M285.9 156.8L287.8 158.4M288.1 156.0L289.8 155.2M288.1 156.0L287.8 158.4M288.1 156.0L289.2 157.8M289.8 155.2L291.5 154.8M289.8 155.2L289.2 157.8M289.8 155.2L291.1 157.0M291.5 154.8L293.5 154.2M291.5 154.8L291.1 157.0M291.5 154.8L292.9 156.2M293.5 154.2L295.5 153.9M293.5 154.2L292.9 156.2M293.5 154.2L295.0 156.1M295.5 153.9L297.4 153.3M295.5 153.9L295.0 156.1M295.5 153.9L296.7 155.1M297.4 153.3L298.9 152.6M297.4 153.3L296.7 155.1M297.4 153.3L299.0 155.0M298.9 152.6L300.9 151.8M298.9 152.6L299.0 155.0M298.9 152.6L300.9 154.4M300.9 151.8L302.7 151.7M300.9 151.8L300.9 154.4M300.9 151.8L302.4 153.5M302.7 151.7L305.0 150.8M302.7 151.7L302.4 153.5M302.7 151.7L304.3 153.2M305.0 150.8L306.4 150.3M305.0 150.8L304.3 153.2M305.0 150.8L306.5 152.5M306.4 150.3L308.3 149.7M306.4 150.3L306.5 152.5M306.4 150.3L308.5 152.1M308.3 149.7L310.1 149.2M308.3 149.7L308.5 152.1M308.3 149.7L309.9 151.5M310.1 149.2L312.1 148.5M310.1 149.2L309.9 151.5M310.1 149.2L311.8 151.1M312.1 148.5L314.0 147.9M312.1 148.5L311.8 151.1M287.8 158.4L289.2 157.8M287.8 158.4L288.8 160.0M289.2 157.8L291.1 157.0M289.2 157.8L288.8 160.0M289.2 157.8L290.9 159.1M291.1 157.0L292.9 156.2M291.1 157.0L290.9 159.1M291.1 157.0L292.7 158.5M292.9 156.2L295.0 156.1M292.9 156.2L292.7 158.5M292.9 156.2L294.8 158.4M295.0 156.1L296.7 155.1M295.0 156.1L294.8 158.4M295.0 156.1L296.5 157.3M296.7 155.1L299.0 155.0M296.7 155.1L296.5 157.3M296.7 155.1L298.7 157.2M299.0 155.0L300.9 154.4M299.0 155.0L298.7 157.2M299.0 155.0L300.3 156.5M300.9 154.4L302.4 153.5M300.9 154.4L300.3 156.5M300.9 154.4L302.0 156.0M302.4 153.5L304.3 153.2M302.4 153.5L302.0 156.0M302.4 153.5L304.4 155.1M304.3 153.2L306.5 152.5M304.3 153.2L304.4 155.1M304.3 153.2L305.9 154.6M306.5 152.5L308.5 152.1M306.5 152.5L305.9 154.6M306.5 152.5L307.6 153.9M308.5 152.1L309.9 151.5M308.5 152.1L307.6 153.9M308.5 152.1L309.6 153.3M309.9 151.5L311.8 151.1M309.9 151.5L309.6 153.3M309.9 151.5L311.6 152.9M311.8 151.1L311.6 152.9M288.8 160.0L290.9 159.1M288.8 160.0L290.6 161.7M290.9 159.1L292.7 158.5M290.9 159.1L290.6 161.7M290.9 159.1L292.6 160.7M292.7 158.5L294.8 158.4M292.7 158.5L292.6 160.7M292.7 158.5L294.1 160.4M294.8 158.4L296.5 157.3M294.8 158.4L294.1 160.4M294.8 158.4L296.2 159.7M296.5 157.3L298.7 157.2M296.5 157.3L296.2 159.7M296.5 157.3L298.2 159.1M298.7 157.2L300.3 156.5M298.7 157.2L298.2 159.1M298.7 157.2L300.2 158.4M300.3 156.5L302.0 156.0M300.3 156.5L300.2 158.4M300.3 156.5L301.6 158.0M302.0 156.0L304.4 155.1M302.0 156.0L301.6 158.0M302.0 156.0L303.5 157.8M304.4 155.1L305.9 154.6M304.4 155.1L303.5 157.8M304.4 155.1L305.7 157.2M305.9 154.6L307.6 153.9M305.9 154.6L305.7 157.2M305.9 154.6L307.4 156.6M307.6 153.9L309.6 153.3M307.6 153.9L307.4 156.6M307.6 153.9L309.6 156.1M309.6 153.3L311.6 152.9M309.6 153.3L309.6 156.1M309.6 153.3L311.4 155.0M311.6 152.9L311.4 155.0M290.6 161.7L292.6 160.7M292.6 160.7L294.1 160.4M292.6 160.7L294.3 162.8M294.1 160.4L296.2 159.7M294.1 160.4L294.3 162.8M294.1 160.4L295.8 162.0M296.2 159.7L298.2 159.1M296.2 159.7L295.8 162.0M296.2 159.7L297.9 161.7M298.2 159.1L300.2 158.4M298.2 159.1L297.9 161.7M298.2 159.1L299.4 160.9M300.2 158.4L301.6 158.0M300.2 158.4L299.4 160.9M300.2 158.4L301.7 160.1M301.6 158.0L303.5 157.8M301.6 158.0L301.7 160.1M301.6 158.0L303.7 159.8M303.5 157.8L305.7 157.2M303.5 157.8L303.7 159.8M303.5 157.8L305.4 158.9M305.7 157.2L307.4 156.6M305.7 157.2L305.4 158.9M305.7 157.2L307.1 158.6M307.4 156.6L309.6 156.1M307.4 156.6L307.1 158.6M307.4 156.6L308.9 158.3M309.6 156.1L311.4 155.0M309.6 156.1L308.9 158.3M294.3 162.8L295.8 162.0M295.8 162.0L297.9 161.7M297.9 161.7L299.4 160.9M297.9 161.7L299.2 163.0M299.4 160.9L301.7 160.1M299.4 160.9L299.2 163.0M299.4 160.9L301.0 162.6M301.7 160.1L303.7 159.8M301.7 160.1L301.0 162.6M301.7 160.1L303.0 161.7M303.7 159.8L305.4 158.9M303.7 159.8L303.0 161.7M303.7 159.8L304.9 161.6M305.4 158.9L307.1 158.6M305.4 158.9L304.9 161.6M305.4 158.9L306.7 160.5M307.1 158.6L308.9 158.3M307.1 158.6L306.7 160.5M299.2 163.0L301.0 162.6M301.0 162.6L303.0 161.7M303.0 161.7L304.9 161.6M304.9 161.6L306.7 160.5" stroke="#111" stroke-width="0.6" fill="none" clip-path="url(#cc2)"/><ellipse cx="299" cy="147.5" rx="5.5" ry="5" fill="#000"/><polygon points="232.0,246.0 416.0,191.0 437.5,294.5 269.0,345.5" fill="#bababa"/><path d="M232.0 246.0L269.0 345.5M243.5 242.6L279.5 342.3M255.0 239.1L290.1 339.1M266.5 235.7L300.6 335.9M278.0 232.2L311.1 332.8M289.5 228.8L321.7 329.6M301.0 225.4L332.2 326.4M312.5 221.9L342.7 323.2M324.0 218.5L353.2 320.0M335.5 215.1L363.8 316.8M347.0 211.6L374.3 313.6M358.5 208.2L384.8 310.4M370.0 204.8L395.4 307.2M381.5 201.3L405.9 304.1M393.0 197.9L416.4 300.9M404.5 194.4L427.0 297.7M416.0 191.0L437.5 294.5" stroke="#151515" stroke-width="1.05" fill="none"/><path d="M232.0 246.0L416.0 191.0M234.2 251.9L417.3 197.1M236.4 257.7L418.5 203.2M238.5 263.6L419.8 209.3M240.7 269.4L421.1 215.4M242.9 275.3L422.3 221.4M245.1 281.1L423.6 227.5M247.2 287.0L424.9 233.6M249.4 292.8L426.1 239.7M251.6 298.7L427.4 245.8M253.8 304.5L428.6 251.9M255.9 310.4L429.9 258.0M258.1 316.2L431.2 264.1M260.3 322.1L432.4 270.1M262.5 327.9L433.7 276.2M264.6 333.8L435.0 282.3M266.8 339.6L436.2 288.4M269.0 345.5L437.5 294.5" stroke="#2a2a2a" stroke-width="0.85" fill="none"/><polygon points="194.6,108.0 366.0,55.0 416.0,191.0 437.5,294.5 269.0,345.5 232.0,246.0" fill="none" stroke="#000" stroke-width="1.4"/><line x1="232" y1="246" x2="416" y2="191" stroke="#000" stroke-width="1.5"/><g fill="#ee1111" font-family="Liberation Sans" font-weight="bold" font-size="14"><text x="234" y="133" textLength="20" lengthAdjust="spacingAndGlyphs">Air</text><text x="334" y="133" textLength="31" lengthAdjust="spacingAndGlyphs">clad</text><text x="258" y="194" textLength="32" lengthAdjust="spacingAndGlyphs">core</text></g><g stroke="#ee1111" stroke-width="1.3"><line x1="325" y1="128" x2="304" y2="146"/><line x1="287" y1="183" x2="290" y2="158"/></g><g fill="#ee1111"><path d="M300 151 l10 -3.5 l-5.5 -6 z"/><path d="M290 152 l-4 9 l7.5 0 z"/></g><g fill="#333" font-family="Liberation Sans" font-size="10"><text x="260.5" y="65.5" textLength="19" lengthAdjust="spacingAndGlyphs">×10</text><text x="279.5" y="61" font-size="8">-4</text><text x="391" y="111.5" textLength="19" lengthAdjust="spacingAndGlyphs">×10</text><text x="410" y="107" font-size="8">-4</text><text x="183" y="109">1</text><text x="438" y="308">5</text><text x="354" y="333">0</text><text x="243" y="287" font-size="7" fill="#888">0</text><text x="258.5" y="356">-5</text><text x="268.5" y="361.5">-5</text></g><g transform="translate(-703 -4)"><line x1="731" y1="350" x2="751" y2="344" stroke="#e01010" stroke-width="1.6"/><path d="M752 343.5 l-6 -1 l1.5 4 z" fill="#e01010"/><line x1="731" y1="350" x2="727" y2="339" stroke="#1010d0" stroke-width="1.6"/><path d="M726.5 337.5 l-1.8 5 l4 -0.5 z" fill="#1010d0"/><line x1="727" y1="338" x2="726" y2="335" stroke="#108a10" stroke-width="1.6"/><text x="721.5" y="331" font-family="Liberation Sans" font-size="9" fill="#222">y</text><text x="722.5" y="337" font-family="Liberation Sans" font-size="8.5" fill="#222">z</text><text x="755" y="344" font-family="Liberation Sans" font-size="9" fill="#222">x</text></g></svg>
<svg class="r" style="left:0px;top:0px" width="1358" height="60"><circle cx="709.5" cy="34.8" r="3.7" fill="#fff" stroke="#3c4550" stroke-width="1.25"/><line x1="712.2" y1="37.5" x2="715.1" y2="40.4" stroke="#3c4550" stroke-width="1.7"/><line x1="707.7" y1="34.8" x2="711.3" y2="34.8" stroke="#3c4550" stroke-width="1.2"/><line x1="709.5" y1="33.0" x2="709.5" y2="36.599999999999994" stroke="#3c4550" stroke-width="1.2"/><circle cx="727.3" cy="34.8" r="3.7" fill="#fff" stroke="#3c4550" stroke-width="1.25"/><line x1="730.0" y1="37.5" x2="732.9" y2="40.4" stroke="#3c4550" stroke-width="1.7"/><line x1="725.5" y1="34.8" x2="729.0999999999999" y2="34.8" stroke="#3c4550" stroke-width="1.2"/><rect x="740.5" y="34.5" width="6" height="5.5" fill="none" stroke="#5a6a80" stroke-dasharray="1.2 1"/><circle cx="746.8" cy="34.5" r="3.7" fill="#fff" stroke="#3c4550" stroke-width="1.25"/><line x1="749.5" y1="37.2" x2="752.4" y2="40.1" stroke="#3c4550" stroke-width="1.7"/><line x1="745.0" y1="34.5" x2="748.5999999999999" y2="34.5" stroke="#3c4550" stroke-width="1.2"/><line x1="746.8" y1="32.7" x2="746.8" y2="36.3" stroke="#3c4550" stroke-width="1.2"/><g stroke="#8c9198" fill="none"><rect x="761.5" y="32.5" width="7" height="7" fill="#fff"/><line x1="765" y1="34" x2="765" y2="38"/><line x1="763" y1="36" x2="767" y2="36"/></g><g fill="#8c9198"><path d="M765 29.8 l1.5 1.5 h-3z"/><path d="M765 42 l1.5 -1.5 h-3z"/><path d="M759 36 l1.5 -1.5 v3z"/><path d="M771 36 l-1.5 -1.5 v3z"/></g><rect x="776.5" y="29.5" width="11.5" height="11.5" fill="#fff" stroke="#7d838a" stroke-width="1"/><g stroke="#7d838a" stroke-width="0.9"><line x1="782.2" y1="32" x2="782.2" y2="38.5"/><line x1="779" y1="35.2" x2="785.5" y2="35.2"/></g><g fill="#6d737a"><path d="M782.2 30.8 l1.5 1.6 h-3z"/><path d="M782.2 39.7 l1.5 -1.6 h-3z"/><path d="M777.8 35.2 l1.6 -1.5 v3z"/><path d="M786.7 35.2 l-1.6 -1.5 v3z"/></g><line x1="796" y1="30" x2="796" y2="42" stroke="#dcdfe3" stroke-width="1.2"/><line x1="893.5" y1="30" x2="893.5" y2="42" stroke="#dcdfe3" stroke-width="1.2"/><line x1="1013" y1="30" x2="1013" y2="42" stroke="#dcdfe3" stroke-width="1.2"/><line x1="1096" y1="30" x2="1096" y2="42" stroke="#dcdfe3" stroke-width="1.2"/><line x1="1198" y1="30" x2="1198" y2="42" stroke="#dcdfe3" stroke-width="1.2"/><line x1="1263" y1="30" x2="1263" y2="42" stroke="#dcdfe3" stroke-width="1.2"/><g stroke="#55606a" stroke-width="1.1" fill="none"><line x1="810.5" y1="31" x2="810.5" y2="39.5"/><line x1="806.3" y1="35.5" x2="810.5" y2="39.5"/><line x1="810.5" y1="39.5" x2="817" y2="35.3" stroke="#7a5a70"/></g><g fill="#55606a"><circle cx="810.5" cy="31" r="0.9"/><circle cx="806.3" cy="35.5" r="0.9"/><circle cx="817" cy="35.3" r="0.9" fill="#7a5a70"/></g><path d="M823.5 34 h6 l-3 3.5z" fill="#111"/><path d="M839.5 31 V39.5 H849.5" stroke="#6f8a6f" stroke-width="1.1" fill="none"/><text x="841.7" y="37.5" font-family="Liberation Sans" font-size="7.5" fill="#5f6a76" textLength="8" lengthAdjust="spacingAndGlyphs">xy</text><path d="M857.5 31 V39.5 H867.5" stroke="#6f8a6f" stroke-width="1.1" fill="none"/><text x="859.7" y="37.5" font-family="Liberation Sans" font-size="7.5" fill="#5f6a76" textLength="8" lengthAdjust="spacingAndGlyphs">yz</text><path d="M875.5 31 V39.5 H885.5" stroke="#8a6f78" stroke-width="1.1" fill="none"/><text x="877.7" y="37.5" font-family="Liberation Sans" font-size="7.5" fill="#5f6a76" textLength="8" lengthAdjust="spacingAndGlyphs">zx</text><rect x="904" y="29.5" width="7.5" height="7" fill="#e6e6e6" stroke="#d0d0d0" stroke-width="0.6"/><rect x="908" y="33.8" width="7.5" height="7.5" rx="1.3" fill="#b6b6b6"/><rect x="921.5" y="31" width="12.5" height="8.5" rx="2.5" fill="#3d5b83"/><line x1="922.5" y1="35.3" x2="933" y2="35.3" stroke="#8aa6c6" stroke-width="0.8"/><rect x="939.5" y="29.5" width="13" height="13" rx="1.5" fill="#cfe2f6" stroke="#6b98cc" stroke-width="1"/><rect x="941.5" y="32" width="9" height="8" fill="#3d5b83"/><rect x="942.5" y="32.5" width="7" height="2.5" fill="#e8eef6"/><rect x="957.5" y="31" width="11.5" height="8.5" rx="2.5" fill="#f2f4f6" stroke="#6c737c" stroke-width="1.1"/><line x1="958" y1="35.3" x2="968.5" y2="35.3" stroke="#6c737c" stroke-width="0.9"/><rect x="975.5" y="31" width="11.5" height="8.5" rx="2.5" fill="#f2f4f6" stroke="#6c737c" stroke-width="1.1"/><line x1="976" y1="35.3" x2="986.5" y2="35.3" stroke="#6c737c" stroke-width="0.9"/><rect x="995" y="33" width="9.5" height="7" rx="1" fill="#dae7f3" stroke="#9fb3c8" stroke-width="0.8"/><line x1="994" y1="30" x2="1005.5" y2="41.5" stroke="#4a6a90" stroke-width="1"/><rect x="1023.5" y="31.5" width="11" height="9" rx="2" fill="#eef1f4" stroke="#7a828c" stroke-width="1.1"/><rect x="1026" y="30" width="6" height="5" fill="#fff" stroke="#7a828c" stroke-width="0.9"/><line x1="1024" y1="36.5" x2="1034" y2="36.5" stroke="#7a828c"/><rect x="1041" y="31.5" width="12" height="9" rx="2" fill="#2f4f78"/><rect x="1043.5" y="29.5" width="7" height="5" fill="#5f7fa6" stroke="#2f4f78" stroke-width="0.8"/><line x1="1042" y1="37" x2="1052" y2="37" stroke="#9ab0cc" stroke-width="0.8"/><rect x="1060.5" y="30.5" width="10.5" height="10.5" fill="#e4eef8" stroke="#4f78a8" stroke-width="1" stroke-dasharray="1.5 1"/><path d="M1064 33 l6 6 M1064 33 v5 l1.5 -1.5" stroke="#3f5f88" stroke-width="1.1" fill="none"/><rect x="1077.5" y="30.5" width="10.5" height="10.5" fill="#e6eef6" stroke="#6f8fb0" stroke-width="1" stroke-dasharray="1.5 1"/><path d="M1079 29 L1085 40" stroke="#c9a27a" stroke-width="1.5"/><path d="M1107 36 q5 -4 10 0 q-5 4 -10 0z" fill="none" stroke="#8a929a" stroke-width="1.1"/><line x1="1108" y1="32" x2="1116" y2="40" stroke="#8a929a" stroke-width="1.1"/><rect x="1124.5" y="29.5" width="12.5" height="12.5" rx="1.5" fill="#d3e4f5" stroke="#5d83b3" stroke-width="1"/><rect x="1124.5" y="29.5" width="12.5" height="2.5" fill="#5d83b3"/><ellipse cx="1130.8" cy="36.5" rx="3.8" ry="2.3" fill="#2f4f78"/><rect x="1142.5" y="30.5" width="12" height="11" fill="#f0f3f6" stroke="#6f7880" stroke-width="1"/><rect x="1142.5" y="30.5" width="12" height="2" fill="#6f7880"/><path d="M1145.5 35.5 q3 -2 6 0 q-3 2 -6 0z M1145.5 33.5 L1151.5 39" stroke="#6f7880" stroke-width="0.9" fill="none"/><rect x="1160.5" y="30.5" width="12" height="11" fill="#f0f3f6" stroke="#6f7880" stroke-width="1"/><rect x="1160.5" y="30.5" width="12" height="2" fill="#6f7880"/><path d="M1163 34.5 h7 l-2 2.5 h-3z" fill="#3f5f80"/><line x1="1166.5" y1="37" x2="1166.5" y2="40" stroke="#3f5f80" stroke-width="1.2"/><path d="M1181.8 33.2 A3.8 3.8 0 1 1 1181 37.5" fill="none" stroke="#5a626a" stroke-width="1.2"/><path d="M1180 31.2 l0.2 3.6 l3.2 -1.6z" fill="#5a626a"/><rect x="1207.5" y="29.5" width="13.5" height="13" rx="1.5" fill="#a9cdf0" stroke="#5d83b3" stroke-width="1"/><path d="M1210 34 h3 l4 -3 v10 l-4 -3 h-3z" fill="#2f5a8e"/><rect x="1227.5" y="31.5" width="8" height="7" fill="#fff" stroke="#6d7f95" stroke-width="1"/><rect x="1229.5" y="33.5" width="8" height="7" fill="#e4ecf5" stroke="#6d7f95" stroke-width="1"/><rect x="1245.5" y="31.5" width="8" height="7" fill="#fff" stroke="#5d7290" stroke-width="1.1"/><rect x="1247.5" y="33.5" width="8" height="7" fill="#fff" stroke="#5d7290" stroke-width="1.1"/><rect x="1274" y="32.5" width="12" height="8" rx="1" fill="#3f6fa8"/><rect x="1277" y="31" width="5" height="2" fill="#3f6fa8"/><circle cx="1280" cy="36.5" r="2.5" fill="#fff"/><circle cx="1280" cy="36.5" r="1.5" fill="#3f6fa8"/><rect x="1294.5" y="29.5" width="7" height="4" fill="#fff" stroke="#3f6fa8" stroke-width="1"/><rect x="1292" y="33" width="12" height="6" rx="1" fill="#3f6fa8"/><rect x="1294" y="38.5" width="8" height="3" fill="#fff" stroke="#3f6fa8" stroke-width="0.8"/><path d="M1325 15.5 h6 l-3 3z" fill="#333"/><path d="M1336.5 13.5 h4 v5 h1 v1 h-2.5 v3 h-1 v-3 h-2.5 v-1 h1z" fill="#333"/><path d="M1328.5 52 h5.5 q4.5 0 4.5 4 q0 4 -4.5 4 h-5.5z" fill="#1f3a8a"/><rect x="1329.8" y="53.5" width="4.5" height="5" fill="#d8e66a"/><path d="M1334.3 53.5 q3 2.5 0 5z" fill="#4f9ae0"/></svg>
</body></html>
